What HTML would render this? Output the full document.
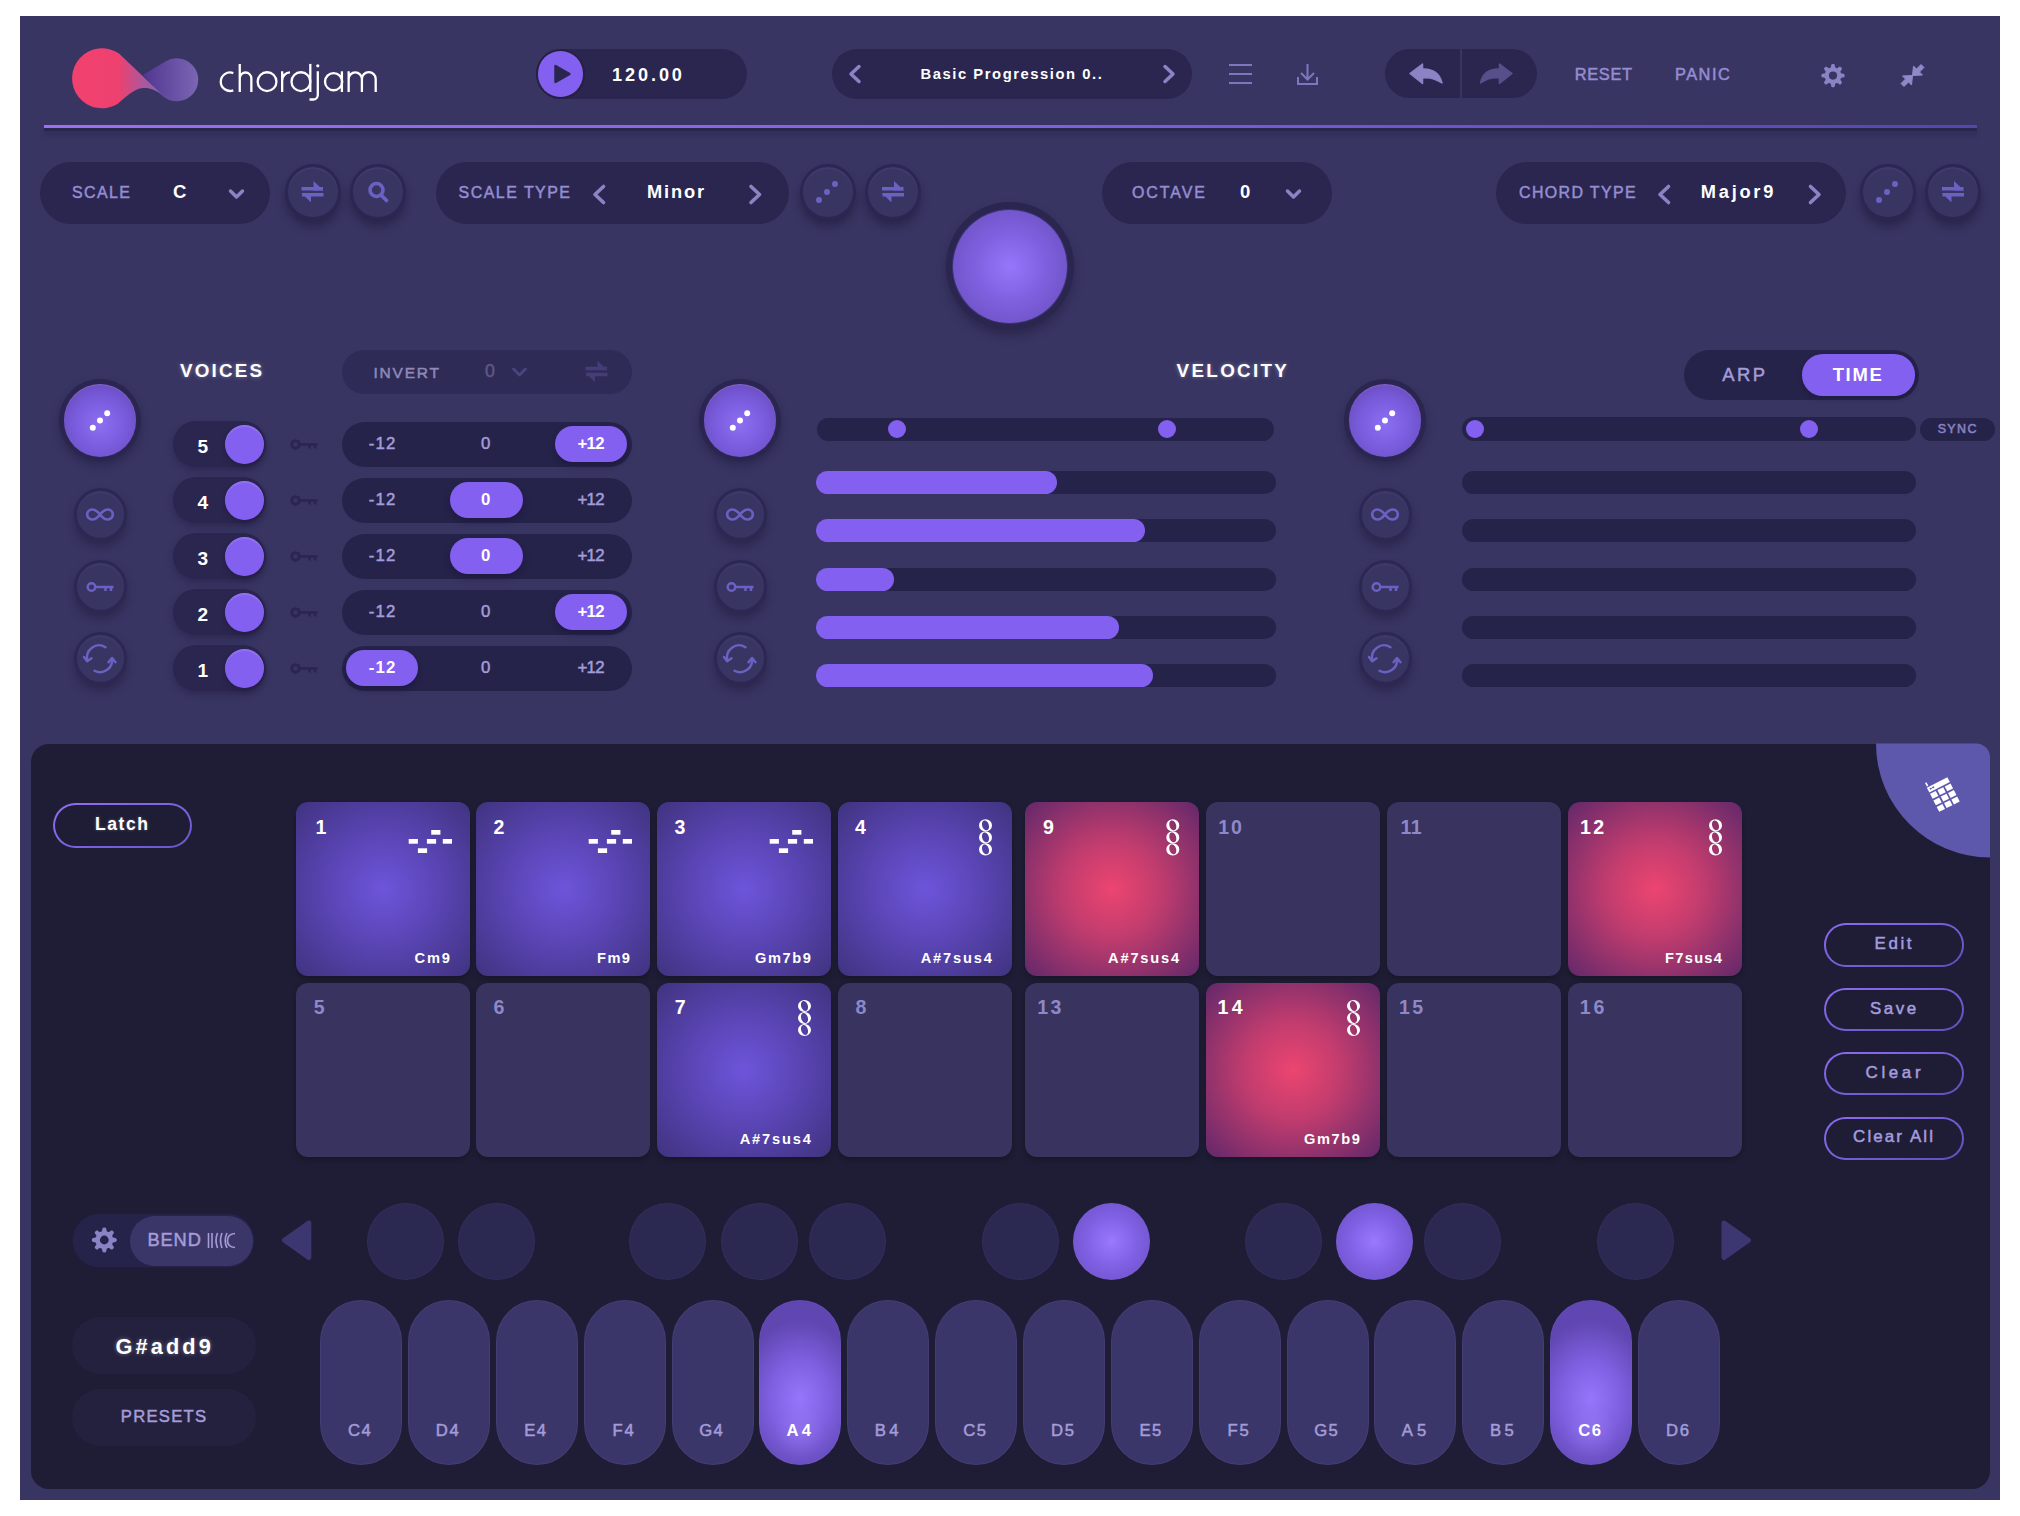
<!DOCTYPE html>
<html><head><meta charset="utf-8"><style>
html,body{margin:0;padding:0;width:2020px;height:1516px;overflow:hidden;background:#fff;}
body{position:relative;font-family:"Liberation Sans",sans-serif;}
.b{position:absolute;}
.t{position:absolute;line-height:1;white-space:nowrap;}
svg.ov{position:absolute;left:0;top:0;}
</style></head><body>
<div class="b" style="left:20.0px;top:16.0px;width:1980.0px;height:1484.0px;border-radius:0.0px;background:#393563;"></div>
<div class="b" style="left:44.0px;top:125.0px;width:1933.0px;height:3.0px;border-radius:0.0px;background:linear-gradient(90deg,#9c70f2 0%,#7f62e0 50%,#5447aa 100%);box-shadow:0 3px 1px rgba(30,27,62,.55), 0 7px 4px rgba(30,27,62,.35)"></div>
<div class="b" style="left:537.0px;top:49.0px;width:210.0px;height:50.0px;border-radius:25.0px;background:#2a2650;"></div>
<div class="b" style="left:537.6px;top:51.2px;width:45.5px;height:45.5px;border-radius:22.8px;background:#8460f0;box-shadow:0 0 0 2px #25213f"></div>
<div class="t" style="left:612.0px;top:65.6px;font-size:18.12px;letter-spacing:2.91px;color:#fff;font-weight:700;">120.00</div>
<div class="b" style="left:832.0px;top:49.0px;width:360.0px;height:50.0px;border-radius:25.0px;background:#2a2650;"></div>
<div class="t" style="left:920.5px;top:66.6px;font-size:14.78px;letter-spacing:1.56px;color:#fff;font-weight:700;">Basic Progression 0..</div>
<div class="b" style="left:1385.0px;top:49.0px;width:152.0px;height:49.0px;border-radius:24.5px;background:#2a2650;"></div>
<div class="b" style="left:1460.0px;top:49.0px;width:2.0px;height:49.0px;border-radius:0.0px;background:#393563;"></div>
<div class="t" style="left:1574.7px;top:66.1px;font-size:16.38px;letter-spacing:0.72px;color:#958dd0;font-weight:400;-webkit-text-stroke:0.5px #958dd0;">RESET</div>
<div class="t" style="left:1675.0px;top:66.1px;font-size:16.38px;letter-spacing:1.50px;color:#958dd0;font-weight:400;-webkit-text-stroke:0.5px #958dd0;">PANIC</div>
<div class="b" style="left:40.0px;top:162.0px;width:230.0px;height:62.0px;border-radius:31.0px;background:#2a2650;"></div>
<div class="t" style="left:72.0px;top:185.1px;font-size:15.94px;letter-spacing:1.43px;color:#958dd0;font-weight:400;-webkit-text-stroke:0.5px #958dd0;">SCALE</div>
<div class="t" style="left:173.0px;top:183.2px;font-size:18.55px;letter-spacing:0.00px;color:#fff;font-weight:700;">C</div>
<div class="b" style="left:284.5px;top:163.5px;width:56.0px;height:56.0px;border-radius:28.0px;background:#393563;border:3px solid #2b2752;box-sizing:border-box;box-shadow:0 7px 9px rgba(22,20,48,.45), inset 0 2px 1px rgba(120,110,200,.12)"></div>
<div class="b" style="left:350.0px;top:163.5px;width:56.0px;height:56.0px;border-radius:28.0px;background:#393563;border:3px solid #2b2752;box-sizing:border-box;box-shadow:0 7px 9px rgba(22,20,48,.45), inset 0 2px 1px rgba(120,110,200,.12)"></div>
<div class="b" style="left:436.0px;top:162.0px;width:352.5px;height:62.0px;border-radius:31.0px;background:#2a2650;"></div>
<div class="t" style="left:458.6px;top:185.1px;font-size:15.94px;letter-spacing:1.48px;color:#958dd0;font-weight:400;-webkit-text-stroke:0.5px #958dd0;">SCALE TYPE</div>
<div class="t" style="left:646.9px;top:183.3px;font-size:18.26px;letter-spacing:1.88px;color:#fff;font-weight:700;">Minor</div>
<div class="b" style="left:799.6px;top:163.5px;width:56.0px;height:56.0px;border-radius:28.0px;background:#393563;border:3px solid #2b2752;box-sizing:border-box;box-shadow:0 7px 9px rgba(22,20,48,.45), inset 0 2px 1px rgba(120,110,200,.12)"></div>
<div class="b" style="left:865.0px;top:163.5px;width:56.0px;height:56.0px;border-radius:28.0px;background:#393563;border:3px solid #2b2752;box-sizing:border-box;box-shadow:0 7px 9px rgba(22,20,48,.45), inset 0 2px 1px rgba(120,110,200,.12)"></div>
<div class="b" style="left:1102.0px;top:162.0px;width:229.5px;height:62.0px;border-radius:31.0px;background:#2a2650;"></div>
<div class="t" style="left:1132.0px;top:185.1px;font-size:15.94px;letter-spacing:1.96px;color:#958dd0;font-weight:400;-webkit-text-stroke:0.5px #958dd0;">OCTAVE</div>
<div class="t" style="left:1240.0px;top:183.2px;font-size:18.55px;letter-spacing:0.00px;color:#fff;font-weight:700;">0</div>
<div class="b" style="left:1496.0px;top:162.0px;width:350.0px;height:62.0px;border-radius:31.0px;background:#2a2650;"></div>
<div class="t" style="left:1519.0px;top:185.1px;font-size:15.94px;letter-spacing:1.38px;color:#958dd0;font-weight:400;-webkit-text-stroke:0.5px #958dd0;">CHORD TYPE</div>
<div class="t" style="left:1700.8px;top:183.3px;font-size:18.26px;letter-spacing:2.74px;color:#fff;font-weight:700;">Major9</div>
<div class="b" style="left:1859.5px;top:163.5px;width:56.0px;height:56.0px;border-radius:28.0px;background:#393563;border:3px solid #2b2752;box-sizing:border-box;box-shadow:0 7px 9px rgba(22,20,48,.45), inset 0 2px 1px rgba(120,110,200,.12)"></div>
<div class="b" style="left:1925.0px;top:163.5px;width:56.0px;height:56.0px;border-radius:28.0px;background:#393563;border:3px solid #2b2752;box-sizing:border-box;box-shadow:0 7px 9px rgba(22,20,48,.45), inset 0 2px 1px rgba(120,110,200,.12)"></div>
<div class="b" style="left:946.0px;top:202.0px;width:128.0px;height:128.0px;border-radius:64.0px;background:#2a2650;box-shadow:0 6px 10px rgba(20,18,45,.35)"></div>
<div class="b" style="left:953.0px;top:209.6px;width:113.5px;height:113.5px;border-radius:56.8px;background:radial-gradient(circle at 50% 50%, #9676fb 0%, #7e60de 45%, #6a4fbf 90%, #7258c8 100%);box-shadow:0 0 0 1px rgba(120,100,220,.25)"></div>
<div class="t" style="left:180.0px;top:362.0px;font-size:18.84px;letter-spacing:2.16px;color:#fff;font-weight:700;text-shadow:0 0 4px rgba(255,255,255,.35)">VOICES</div>
<div class="b" style="left:59.0px;top:379.0px;width:82.0px;height:82.0px;border-radius:41.0px;background:#2a2650;box-shadow:0 5px 8px rgba(20,18,45,.35)"></div>
<div class="b" style="left:63.8px;top:384.2px;width:72.5px;height:72.5px;border-radius:36.2px;background:radial-gradient(circle at 50% 55%, #8c6ef3 0%, #7a5dde 45%, #6447b4 92%, #7058c4 100%);box-shadow:inset 0 1px 1px rgba(255,255,255,.12)"></div>
<div class="b" style="left:73.5px;top:487.5px;width:53.0px;height:53.0px;border-radius:26.5px;background:#393563;border:3px solid #2c2853;box-sizing:border-box;box-shadow:0 6px 8px rgba(22,20,48,.40), inset 0 2px 1px rgba(120,110,200,.10)"></div>
<div class="b" style="left:73.5px;top:559.5px;width:53.0px;height:53.0px;border-radius:26.5px;background:#393563;border:3px solid #2c2853;box-sizing:border-box;box-shadow:0 6px 8px rgba(22,20,48,.40), inset 0 2px 1px rgba(120,110,200,.10)"></div>
<div class="b" style="left:73.5px;top:632.0px;width:53.0px;height:53.0px;border-radius:26.5px;background:#393563;border:3px solid #2c2853;box-sizing:border-box;box-shadow:0 6px 8px rgba(22,20,48,.40), inset 0 2px 1px rgba(120,110,200,.10)"></div>
<div class="b" style="left:173.0px;top:421.0px;width:93.0px;height:46.0px;border-radius:23.0px;background:#2a2650;box-shadow:0 4px 6px rgba(20,18,45,.30)"></div>
<div class="t" style="left:197.5px;top:436.5px;font-size:19.13px;letter-spacing:0.00px;color:#fff;font-weight:700;">5</div>
<div class="b" style="left:224.5px;top:424.5px;width:39.0px;height:39.0px;border-radius:19.5px;background:#8460f0;box-shadow:0 3px 5px rgba(20,18,45,.35), inset 0 2px 1px rgba(255,255,255,.12)"></div>
<div class="b" style="left:341.5px;top:421.5px;width:290.5px;height:45.0px;border-radius:22.5px;background:#26234b;"></div>
<div class="b" style="left:554.8px;top:426.0px;width:72.4px;height:36.0px;border-radius:18.0px;background:#8460f0;box-shadow:0 4px 6px rgba(15,12,40,.35)"></div>
<div class="t" style="left:368.8px;top:435.7px;font-size:16.81px;letter-spacing:1.10px;color:#a49cd8;font-weight:400;-webkit-text-stroke:0.5px #a49cd8;">-12</div>
<div class="t" style="left:481.0px;top:435.7px;font-size:16.81px;letter-spacing:0.00px;color:#a49cd8;font-weight:400;-webkit-text-stroke:0.5px #a49cd8;">0</div>
<div class="t" style="left:577.5px;top:435.7px;font-size:16.81px;letter-spacing:-0.75px;color:#fff;font-weight:700;">+12</div>
<div class="b" style="left:173.0px;top:477.0px;width:93.0px;height:46.0px;border-radius:23.0px;background:#2a2650;box-shadow:0 4px 6px rgba(20,18,45,.30)"></div>
<div class="t" style="left:197.5px;top:492.5px;font-size:19.13px;letter-spacing:0.00px;color:#fff;font-weight:700;">4</div>
<div class="b" style="left:224.5px;top:480.5px;width:39.0px;height:39.0px;border-radius:19.5px;background:#8460f0;box-shadow:0 3px 5px rgba(20,18,45,.35), inset 0 2px 1px rgba(255,255,255,.12)"></div>
<div class="b" style="left:341.5px;top:477.5px;width:290.5px;height:45.0px;border-radius:22.5px;background:#26234b;"></div>
<div class="b" style="left:450.3px;top:482.0px;width:72.4px;height:36.0px;border-radius:18.0px;background:#8460f0;box-shadow:0 4px 6px rgba(15,12,40,.35)"></div>
<div class="t" style="left:368.8px;top:491.7px;font-size:16.81px;letter-spacing:1.10px;color:#a49cd8;font-weight:400;-webkit-text-stroke:0.5px #a49cd8;">-12</div>
<div class="t" style="left:481.0px;top:491.7px;font-size:16.81px;letter-spacing:0.00px;color:#fff;font-weight:700;">0</div>
<div class="t" style="left:577.5px;top:491.7px;font-size:16.81px;letter-spacing:-0.75px;color:#a49cd8;font-weight:400;-webkit-text-stroke:0.5px #a49cd8;">+12</div>
<div class="b" style="left:173.0px;top:533.0px;width:93.0px;height:46.0px;border-radius:23.0px;background:#2a2650;box-shadow:0 4px 6px rgba(20,18,45,.30)"></div>
<div class="t" style="left:197.5px;top:548.5px;font-size:19.13px;letter-spacing:0.00px;color:#fff;font-weight:700;">3</div>
<div class="b" style="left:224.5px;top:536.5px;width:39.0px;height:39.0px;border-radius:19.5px;background:#8460f0;box-shadow:0 3px 5px rgba(20,18,45,.35), inset 0 2px 1px rgba(255,255,255,.12)"></div>
<div class="b" style="left:341.5px;top:533.5px;width:290.5px;height:45.0px;border-radius:22.5px;background:#26234b;"></div>
<div class="b" style="left:450.3px;top:538.0px;width:72.4px;height:36.0px;border-radius:18.0px;background:#8460f0;box-shadow:0 4px 6px rgba(15,12,40,.35)"></div>
<div class="t" style="left:368.8px;top:547.7px;font-size:16.81px;letter-spacing:1.10px;color:#a49cd8;font-weight:400;-webkit-text-stroke:0.5px #a49cd8;">-12</div>
<div class="t" style="left:481.0px;top:547.7px;font-size:16.81px;letter-spacing:0.00px;color:#fff;font-weight:700;">0</div>
<div class="t" style="left:577.5px;top:547.7px;font-size:16.81px;letter-spacing:-0.75px;color:#a49cd8;font-weight:400;-webkit-text-stroke:0.5px #a49cd8;">+12</div>
<div class="b" style="left:173.0px;top:589.0px;width:93.0px;height:46.0px;border-radius:23.0px;background:#2a2650;box-shadow:0 4px 6px rgba(20,18,45,.30)"></div>
<div class="t" style="left:197.5px;top:604.5px;font-size:19.13px;letter-spacing:0.00px;color:#fff;font-weight:700;">2</div>
<div class="b" style="left:224.5px;top:592.5px;width:39.0px;height:39.0px;border-radius:19.5px;background:#8460f0;box-shadow:0 3px 5px rgba(20,18,45,.35), inset 0 2px 1px rgba(255,255,255,.12)"></div>
<div class="b" style="left:341.5px;top:589.5px;width:290.5px;height:45.0px;border-radius:22.5px;background:#26234b;"></div>
<div class="b" style="left:554.8px;top:594.0px;width:72.4px;height:36.0px;border-radius:18.0px;background:#8460f0;box-shadow:0 4px 6px rgba(15,12,40,.35)"></div>
<div class="t" style="left:368.8px;top:603.7px;font-size:16.81px;letter-spacing:1.10px;color:#a49cd8;font-weight:400;-webkit-text-stroke:0.5px #a49cd8;">-12</div>
<div class="t" style="left:481.0px;top:603.7px;font-size:16.81px;letter-spacing:0.00px;color:#a49cd8;font-weight:400;-webkit-text-stroke:0.5px #a49cd8;">0</div>
<div class="t" style="left:577.5px;top:603.7px;font-size:16.81px;letter-spacing:-0.75px;color:#fff;font-weight:700;">+12</div>
<div class="b" style="left:173.0px;top:645.0px;width:93.0px;height:46.0px;border-radius:23.0px;background:#2a2650;box-shadow:0 4px 6px rgba(20,18,45,.30)"></div>
<div class="t" style="left:197.5px;top:660.5px;font-size:19.13px;letter-spacing:0.00px;color:#fff;font-weight:700;">1</div>
<div class="b" style="left:224.5px;top:648.5px;width:39.0px;height:39.0px;border-radius:19.5px;background:#8460f0;box-shadow:0 3px 5px rgba(20,18,45,.35), inset 0 2px 1px rgba(255,255,255,.12)"></div>
<div class="b" style="left:341.5px;top:645.5px;width:290.5px;height:45.0px;border-radius:22.5px;background:#26234b;"></div>
<div class="b" style="left:345.8px;top:650.0px;width:72.4px;height:36.0px;border-radius:18.0px;background:#8460f0;box-shadow:0 4px 6px rgba(15,12,40,.35)"></div>
<div class="t" style="left:368.8px;top:659.7px;font-size:16.81px;letter-spacing:1.10px;color:#fff;font-weight:700;">-12</div>
<div class="t" style="left:481.0px;top:659.7px;font-size:16.81px;letter-spacing:0.00px;color:#a49cd8;font-weight:400;-webkit-text-stroke:0.5px #a49cd8;">0</div>
<div class="t" style="left:577.5px;top:659.7px;font-size:16.81px;letter-spacing:-0.75px;color:#a49cd8;font-weight:400;-webkit-text-stroke:0.5px #a49cd8;">+12</div>
<div class="b" style="left:341.5px;top:349.5px;width:290.5px;height:44.5px;border-radius:22.2px;background:#2f2b57;"></div>
<div class="t" style="left:373.5px;top:364.5px;font-size:15.51px;letter-spacing:1.78px;color:#8e89b8;font-weight:400;-webkit-text-stroke:0.5px #8e89b8;">INVERT</div>
<div class="t" style="left:485.0px;top:362.6px;font-size:17.68px;letter-spacing:0.00px;color:#5e5888;font-weight:400;-webkit-text-stroke:0.5px #5e5888;">0</div>
<div class="t" style="left:1176.6px;top:362.0px;font-size:18.84px;letter-spacing:2.31px;color:#fff;font-weight:700;text-shadow:0 0 4px rgba(255,255,255,.35)">VELOCITY</div>
<div class="b" style="left:699.0px;top:379.0px;width:82.0px;height:82.0px;border-radius:41.0px;background:#2a2650;box-shadow:0 5px 8px rgba(20,18,45,.35)"></div>
<div class="b" style="left:703.8px;top:384.2px;width:72.5px;height:72.5px;border-radius:36.2px;background:radial-gradient(circle at 50% 55%, #8c6ef3 0%, #7a5dde 45%, #6447b4 92%, #7058c4 100%);box-shadow:inset 0 1px 1px rgba(255,255,255,.12)"></div>
<div class="b" style="left:713.5px;top:487.5px;width:53.0px;height:53.0px;border-radius:26.5px;background:#393563;border:3px solid #2c2853;box-sizing:border-box;box-shadow:0 6px 8px rgba(22,20,48,.40), inset 0 2px 1px rgba(120,110,200,.10)"></div>
<div class="b" style="left:713.5px;top:559.5px;width:53.0px;height:53.0px;border-radius:26.5px;background:#393563;border:3px solid #2c2853;box-sizing:border-box;box-shadow:0 6px 8px rgba(22,20,48,.40), inset 0 2px 1px rgba(120,110,200,.10)"></div>
<div class="b" style="left:713.5px;top:632.0px;width:53.0px;height:53.0px;border-radius:26.5px;background:#393563;border:3px solid #2c2853;box-sizing:border-box;box-shadow:0 6px 8px rgba(22,20,48,.40), inset 0 2px 1px rgba(120,110,200,.10)"></div>
<div class="b" style="left:816.5px;top:417.5px;width:457.5px;height:23.5px;border-radius:11.8px;background:#26234b;"></div>
<div class="b" style="left:887.7px;top:420.0px;width:18.0px;height:18.0px;border-radius:9.0px;background:#8460f0;"></div>
<div class="b" style="left:1157.5px;top:420.0px;width:18.0px;height:18.0px;border-radius:9.0px;background:#8460f0;"></div>
<div class="b" style="left:816.0px;top:470.5px;width:459.5px;height:23.0px;border-radius:11.5px;background:#26234b;"></div>
<div class="b" style="left:816.0px;top:470.5px;width:240.6px;height:23.0px;border-radius:11.5px;background:#8460f0;"></div>
<div class="b" style="left:816.0px;top:519.0px;width:459.5px;height:23.0px;border-radius:11.5px;background:#26234b;"></div>
<div class="b" style="left:816.0px;top:519.0px;width:329.0px;height:23.0px;border-radius:11.5px;background:#8460f0;"></div>
<div class="b" style="left:816.0px;top:567.5px;width:459.5px;height:23.0px;border-radius:11.5px;background:#26234b;"></div>
<div class="b" style="left:816.0px;top:567.5px;width:78.0px;height:23.0px;border-radius:11.5px;background:#8460f0;"></div>
<div class="b" style="left:816.0px;top:615.5px;width:459.5px;height:23.0px;border-radius:11.5px;background:#26234b;"></div>
<div class="b" style="left:816.0px;top:615.5px;width:303.0px;height:23.0px;border-radius:11.5px;background:#8460f0;"></div>
<div class="b" style="left:816.0px;top:663.5px;width:459.5px;height:23.0px;border-radius:11.5px;background:#26234b;"></div>
<div class="b" style="left:816.0px;top:663.5px;width:336.7px;height:23.0px;border-radius:11.5px;background:#8460f0;"></div>
<div class="b" style="left:1684.0px;top:349.5px;width:234.5px;height:50.5px;border-radius:25.2px;background:#26234b;"></div>
<div class="b" style="left:1802.0px;top:354.0px;width:113.0px;height:41.5px;border-radius:20.8px;background:#8460f0;box-shadow:0 3px 5px rgba(15,12,40,.3)"></div>
<div class="t" style="left:1722.3px;top:366.0px;font-size:18.41px;letter-spacing:2.39px;color:#a49cd8;font-weight:400;-webkit-text-stroke:0.5px #a49cd8;">ARP</div>
<div class="t" style="left:1832.7px;top:366.0px;font-size:18.41px;letter-spacing:1.67px;color:#fff;font-weight:700;">TIME</div>
<div class="b" style="left:1344.0px;top:379.0px;width:82.0px;height:82.0px;border-radius:41.0px;background:#2a2650;box-shadow:0 5px 8px rgba(20,18,45,.35)"></div>
<div class="b" style="left:1348.8px;top:384.2px;width:72.5px;height:72.5px;border-radius:36.2px;background:radial-gradient(circle at 50% 55%, #8c6ef3 0%, #7a5dde 45%, #6447b4 92%, #7058c4 100%);box-shadow:inset 0 1px 1px rgba(255,255,255,.12)"></div>
<div class="b" style="left:1358.5px;top:487.5px;width:53.0px;height:53.0px;border-radius:26.5px;background:#393563;border:3px solid #2c2853;box-sizing:border-box;box-shadow:0 6px 8px rgba(22,20,48,.40), inset 0 2px 1px rgba(120,110,200,.10)"></div>
<div class="b" style="left:1358.5px;top:559.5px;width:53.0px;height:53.0px;border-radius:26.5px;background:#393563;border:3px solid #2c2853;box-sizing:border-box;box-shadow:0 6px 8px rgba(22,20,48,.40), inset 0 2px 1px rgba(120,110,200,.10)"></div>
<div class="b" style="left:1358.5px;top:632.0px;width:53.0px;height:53.0px;border-radius:26.5px;background:#393563;border:3px solid #2c2853;box-sizing:border-box;box-shadow:0 6px 8px rgba(22,20,48,.40), inset 0 2px 1px rgba(120,110,200,.10)"></div>
<div class="b" style="left:1462.0px;top:417.0px;width:454.0px;height:24.0px;border-radius:12.0px;background:#26234b;"></div>
<div class="b" style="left:1465.8px;top:420.0px;width:18.0px;height:18.0px;border-radius:9.0px;background:#8460f0;"></div>
<div class="b" style="left:1800.0px;top:420.0px;width:18.0px;height:18.0px;border-radius:9.0px;background:#8460f0;"></div>
<div class="b" style="left:1920.0px;top:418.0px;width:75.0px;height:23.0px;border-radius:11.5px;background:#26234b;"></div>
<div class="t" style="left:1937.7px;top:423.0px;font-size:12.46px;letter-spacing:1.38px;color:#8a83c4;font-weight:400;-webkit-text-stroke:0.5px #8a83c4;">SYNC</div>
<div class="b" style="left:1462.0px;top:470.5px;width:454.0px;height:23.0px;border-radius:11.5px;background:#26234b;"></div>
<div class="b" style="left:1462.0px;top:519.0px;width:454.0px;height:23.0px;border-radius:11.5px;background:#26234b;"></div>
<div class="b" style="left:1462.0px;top:567.5px;width:454.0px;height:23.0px;border-radius:11.5px;background:#26234b;"></div>
<div class="b" style="left:1462.0px;top:615.5px;width:454.0px;height:23.0px;border-radius:11.5px;background:#26234b;"></div>
<div class="b" style="left:1462.0px;top:663.5px;width:454.0px;height:23.0px;border-radius:11.5px;background:#26234b;"></div>
<div class="b" style="left:31.0px;top:743.5px;width:1959.0px;height:745.5px;border-radius:18.0px;background:#1e1d35;"></div>
<div class="b" style="left:53.0px;top:803.0px;width:139.0px;height:45.0px;border-radius:22.5px;background:linear-gradient(#1e1d35,#1e1d35) padding-box, linear-gradient(160deg,#916ff2,#6a56cc) border-box;border:2.5px solid transparent;box-sizing:border-box"></div>
<div class="t" style="left:94.9px;top:816.1px;font-size:17.54px;letter-spacing:1.59px;color:#fff;font-weight:700;text-shadow:0 0 3px rgba(255,255,255,.3)">Latch</div>
<div class="b" style="left:296.0px;top:802.4px;width:173.5px;height:173.5px;border-radius:12.0px;background:radial-gradient(circle at 50% 50%, #6d55da 0%, #5a45b5 45%, #40337f 100%);box-shadow:0 3px 5px rgba(0,0,0,.25)"></div>
<div class="t" style="left:315.6px;top:817.6px;font-size:19.57px;letter-spacing:0.00px;color:#fff;font-weight:700;">1</div>
<div class="t" style="left:414.5px;top:951.1px;font-size:14.64px;letter-spacing:1.87px;color:#fff;font-weight:700;">Cm9</div>
<div class="b" style="left:476.0px;top:802.4px;width:173.5px;height:173.5px;border-radius:12.0px;background:radial-gradient(circle at 50% 50%, #6d55da 0%, #5a45b5 45%, #40337f 100%);box-shadow:0 3px 5px rgba(0,0,0,.25)"></div>
<div class="t" style="left:493.5px;top:817.6px;font-size:19.57px;letter-spacing:0.00px;color:#fff;font-weight:700;">2</div>
<div class="t" style="left:597.0px;top:951.1px;font-size:14.64px;letter-spacing:1.46px;color:#fff;font-weight:700;">Fm9</div>
<div class="b" style="left:657.0px;top:802.4px;width:173.5px;height:173.5px;border-radius:12.0px;background:radial-gradient(circle at 50% 50%, #6d55da 0%, #5a45b5 45%, #40337f 100%);box-shadow:0 3px 5px rgba(0,0,0,.25)"></div>
<div class="t" style="left:674.5px;top:817.6px;font-size:19.57px;letter-spacing:0.00px;color:#fff;font-weight:700;">3</div>
<div class="t" style="left:755.0px;top:951.1px;font-size:14.64px;letter-spacing:1.59px;color:#fff;font-weight:700;">Gm7b9</div>
<div class="b" style="left:838.0px;top:802.4px;width:173.5px;height:173.5px;border-radius:12.0px;background:radial-gradient(circle at 50% 50%, #6d55da 0%, #5a45b5 45%, #40337f 100%);box-shadow:0 3px 5px rgba(0,0,0,.25)"></div>
<div class="t" style="left:855.0px;top:817.6px;font-size:19.57px;letter-spacing:0.00px;color:#fff;font-weight:700;">4</div>
<div class="t" style="left:920.7px;top:951.1px;font-size:14.64px;letter-spacing:1.84px;color:#fff;font-weight:700;">A#7sus4</div>
<div class="b" style="left:1025.3px;top:802.4px;width:173.5px;height:173.5px;border-radius:12.0px;background:radial-gradient(circle at 50% 50%, #ec4570 0%, #c03c6e 40%, #62286a 100%);box-shadow:0 3px 5px rgba(0,0,0,.25)"></div>
<div class="t" style="left:1042.9px;top:817.6px;font-size:19.57px;letter-spacing:0.00px;color:#fff;font-weight:700;">9</div>
<div class="t" style="left:1108.0px;top:951.1px;font-size:14.64px;letter-spacing:1.84px;color:#fff;font-weight:700;">A#7sus4</div>
<div class="b" style="left:1206.0px;top:802.4px;width:173.5px;height:173.5px;border-radius:12.0px;background:#38335f;box-shadow:0 3px 5px rgba(0,0,0,.25)"></div>
<div class="t" style="left:1218.2px;top:817.6px;font-size:19.57px;letter-spacing:1.88px;color:#8f88c8;font-weight:700;">10</div>
<div class="b" style="left:1387.0px;top:802.4px;width:173.5px;height:173.5px;border-radius:12.0px;background:#38335f;box-shadow:0 3px 5px rgba(0,0,0,.25)"></div>
<div class="t" style="left:1400.5px;top:817.6px;font-size:19.57px;letter-spacing:0.36px;color:#8f88c8;font-weight:700;">11</div>
<div class="b" style="left:1568.0px;top:802.4px;width:173.5px;height:173.5px;border-radius:12.0px;background:radial-gradient(circle at 50% 50%, #ec4570 0%, #c03c6e 40%, #62286a 100%);box-shadow:0 3px 5px rgba(0,0,0,.25)"></div>
<div class="t" style="left:1580.0px;top:817.6px;font-size:19.57px;letter-spacing:2.28px;color:#fff;font-weight:700;">12</div>
<div class="t" style="left:1665.0px;top:951.1px;font-size:14.64px;letter-spacing:1.31px;color:#fff;font-weight:700;">F7sus4</div>
<div class="b" style="left:296.0px;top:983.0px;width:173.5px;height:173.5px;border-radius:12.0px;background:#38335f;box-shadow:0 3px 5px rgba(0,0,0,.25)"></div>
<div class="t" style="left:313.8px;top:998.2px;font-size:19.57px;letter-spacing:0.00px;color:#8f88c8;font-weight:700;">5</div>
<div class="b" style="left:476.0px;top:983.0px;width:173.5px;height:173.5px;border-radius:12.0px;background:#38335f;box-shadow:0 3px 5px rgba(0,0,0,.25)"></div>
<div class="t" style="left:493.5px;top:998.2px;font-size:19.57px;letter-spacing:0.00px;color:#8f88c8;font-weight:700;">6</div>
<div class="b" style="left:657.0px;top:983.0px;width:173.5px;height:173.5px;border-radius:12.0px;background:radial-gradient(circle at 50% 50%, #6d55da 0%, #5a45b5 45%, #40337f 100%);box-shadow:0 3px 5px rgba(0,0,0,.25)"></div>
<div class="t" style="left:674.8px;top:998.2px;font-size:19.57px;letter-spacing:0.00px;color:#fff;font-weight:700;">7</div>
<div class="t" style="left:739.7px;top:1131.7px;font-size:14.64px;letter-spacing:1.84px;color:#fff;font-weight:700;">A#7sus4</div>
<div class="b" style="left:838.0px;top:983.0px;width:173.5px;height:173.5px;border-radius:12.0px;background:#38335f;box-shadow:0 3px 5px rgba(0,0,0,.25)"></div>
<div class="t" style="left:855.5px;top:998.2px;font-size:19.57px;letter-spacing:0.00px;color:#8f88c8;font-weight:700;">8</div>
<div class="b" style="left:1025.3px;top:983.0px;width:173.5px;height:173.5px;border-radius:12.0px;background:#38335f;box-shadow:0 3px 5px rgba(0,0,0,.25)"></div>
<div class="t" style="left:1037.3px;top:998.2px;font-size:19.57px;letter-spacing:2.28px;color:#8f88c8;font-weight:700;">13</div>
<div class="b" style="left:1206.0px;top:983.0px;width:173.5px;height:173.5px;border-radius:12.0px;background:radial-gradient(circle at 50% 50%, #ec4570 0%, #c03c6e 40%, #62286a 100%);box-shadow:0 3px 5px rgba(0,0,0,.25)"></div>
<div class="t" style="left:1217.5px;top:998.2px;font-size:19.57px;letter-spacing:3.28px;color:#fff;font-weight:700;">14</div>
<div class="t" style="left:1304.0px;top:1131.7px;font-size:14.64px;letter-spacing:1.59px;color:#fff;font-weight:700;">Gm7b9</div>
<div class="b" style="left:1387.0px;top:983.0px;width:173.5px;height:173.5px;border-radius:12.0px;background:#38335f;box-shadow:0 3px 5px rgba(0,0,0,.25)"></div>
<div class="t" style="left:1399.0px;top:998.2px;font-size:19.57px;letter-spacing:2.28px;color:#8f88c8;font-weight:700;">15</div>
<div class="b" style="left:1568.0px;top:983.0px;width:173.5px;height:173.5px;border-radius:12.0px;background:#38335f;box-shadow:0 3px 5px rgba(0,0,0,.25)"></div>
<div class="t" style="left:1579.8px;top:998.2px;font-size:19.57px;letter-spacing:2.78px;color:#8f88c8;font-weight:700;">16</div>
<div class="b" style="left:1824.0px;top:923.0px;width:140.0px;height:43.6px;border-radius:21.8px;background:linear-gradient(#1e1d35,#1e1d35) padding-box, linear-gradient(160deg,#8d6cf0,#5f4fbf) border-box;border:2.5px solid transparent;box-sizing:border-box"></div>
<div class="t" style="left:1874.6px;top:936.1px;font-size:16.96px;letter-spacing:2.58px;color:#a59cdf;font-weight:400;-webkit-text-stroke:0.5px #a59cdf;">Edit</div>
<div class="b" style="left:1824.0px;top:987.6px;width:140.0px;height:43.7px;border-radius:21.8px;background:linear-gradient(#1e1d35,#1e1d35) padding-box, linear-gradient(160deg,#8d6cf0,#5f4fbf) border-box;border:2.5px solid transparent;box-sizing:border-box"></div>
<div class="t" style="left:1870.1px;top:1000.7px;font-size:16.96px;letter-spacing:2.45px;color:#a59cdf;font-weight:400;-webkit-text-stroke:0.5px #a59cdf;">Save</div>
<div class="b" style="left:1824.0px;top:1051.5px;width:140.0px;height:43.5px;border-radius:21.8px;background:linear-gradient(#1e1d35,#1e1d35) padding-box, linear-gradient(160deg,#8d6cf0,#5f4fbf) border-box;border:2.5px solid transparent;box-sizing:border-box"></div>
<div class="t" style="left:1865.6px;top:1064.5px;font-size:16.96px;letter-spacing:3.62px;color:#a59cdf;font-weight:400;-webkit-text-stroke:0.5px #a59cdf;">Clear</div>
<div class="b" style="left:1824.0px;top:1116.5px;width:140.0px;height:43.3px;border-radius:21.6px;background:linear-gradient(#1e1d35,#1e1d35) padding-box, linear-gradient(160deg,#8d6cf0,#5f4fbf) border-box;border:2.5px solid transparent;box-sizing:border-box"></div>
<div class="t" style="left:1853.1px;top:1129.4px;font-size:16.96px;letter-spacing:2.10px;color:#a59cdf;font-weight:400;-webkit-text-stroke:0.5px #a59cdf;">Clear All</div>
<div class="b" style="left:72.0px;top:1213.0px;width:183.0px;height:55.0px;border-radius:27.5px;background:#26234a;box-shadow:inset 0 0 0 1px rgba(0,0,0,.15)"></div>
<div class="b" style="left:130.0px;top:1216.0px;width:123.0px;height:49.5px;border-radius:24.8px;background:#3b3668;"></div>
<div class="t" style="left:147.6px;top:1231.4px;font-size:18.26px;letter-spacing:0.84px;color:#a49cd8;font-weight:400;-webkit-text-stroke:0.5px #a49cd8;">BEND</div>
<div class="b" style="left:366.5px;top:1203.0px;width:77.0px;height:77.0px;border-radius:38.5px;background:#2b2851;box-shadow:inset 0 0 0 1px rgba(120,110,200,.10)"></div>
<div class="b" style="left:458.0px;top:1203.0px;width:77.0px;height:77.0px;border-radius:38.5px;background:#2b2851;box-shadow:inset 0 0 0 1px rgba(120,110,200,.10)"></div>
<div class="b" style="left:629.2px;top:1203.0px;width:77.0px;height:77.0px;border-radius:38.5px;background:#2b2851;box-shadow:inset 0 0 0 1px rgba(120,110,200,.10)"></div>
<div class="b" style="left:720.5px;top:1203.0px;width:77.0px;height:77.0px;border-radius:38.5px;background:#2b2851;box-shadow:inset 0 0 0 1px rgba(120,110,200,.10)"></div>
<div class="b" style="left:808.5px;top:1203.0px;width:77.0px;height:77.0px;border-radius:38.5px;background:#2b2851;box-shadow:inset 0 0 0 1px rgba(120,110,200,.10)"></div>
<div class="b" style="left:981.5px;top:1203.0px;width:77.0px;height:77.0px;border-radius:38.5px;background:#2b2851;box-shadow:inset 0 0 0 1px rgba(120,110,200,.10)"></div>
<div class="b" style="left:1073.0px;top:1203.0px;width:77.0px;height:77.0px;border-radius:38.5px;background:radial-gradient(circle at 50% 50%, #9a78ff 0%, #7e5fe2 50%, #6a4fc0 100%);"></div>
<div class="b" style="left:1244.5px;top:1203.0px;width:77.0px;height:77.0px;border-radius:38.5px;background:#2b2851;box-shadow:inset 0 0 0 1px rgba(120,110,200,.10)"></div>
<div class="b" style="left:1335.5px;top:1203.0px;width:77.0px;height:77.0px;border-radius:38.5px;background:radial-gradient(circle at 50% 50%, #9a78ff 0%, #7e5fe2 50%, #6a4fc0 100%);"></div>
<div class="b" style="left:1423.5px;top:1203.0px;width:77.0px;height:77.0px;border-radius:38.5px;background:#2b2851;box-shadow:inset 0 0 0 1px rgba(120,110,200,.10)"></div>
<div class="b" style="left:1596.9px;top:1203.0px;width:77.0px;height:77.0px;border-radius:38.5px;background:#2b2851;box-shadow:inset 0 0 0 1px rgba(120,110,200,.10)"></div>
<div class="b" style="left:72.0px;top:1317.0px;width:184.0px;height:56.6px;border-radius:28.3px;background:#24213f;"></div>
<div class="t" style="left:115.5px;top:1335.5px;font-size:21.74px;letter-spacing:3.10px;color:#fff;font-weight:700;text-shadow:0 0 4px rgba(255,255,255,.35)">G#add9</div>
<div class="b" style="left:72.0px;top:1389.0px;width:184.0px;height:56.6px;border-radius:28.3px;background:#24213f;"></div>
<div class="t" style="left:120.8px;top:1408.8px;font-size:16.67px;letter-spacing:1.26px;color:#a49cd8;font-weight:400;-webkit-text-stroke:0.5px #a49cd8;">PRESETS</div>
<div class="b" style="left:320.0px;top:1300.0px;width:82.0px;height:165.0px;border-radius:41.0px;background:#3b3669;box-shadow:inset 0 0 0 1px rgba(140,130,220,.10)"></div>
<div class="t" style="left:348.1px;top:1422.6px;font-size:16.67px;letter-spacing:1.47px;color:#a49cd8;font-weight:400;-webkit-text-stroke:0.5px #a49cd8;">C4</div>
<div class="b" style="left:407.9px;top:1300.0px;width:82.0px;height:165.0px;border-radius:41.0px;background:#3b3669;box-shadow:inset 0 0 0 1px rgba(140,130,220,.10)"></div>
<div class="t" style="left:435.8px;top:1422.6px;font-size:16.67px;letter-spacing:1.77px;color:#a49cd8;font-weight:400;-webkit-text-stroke:0.5px #a49cd8;">D4</div>
<div class="b" style="left:495.7px;top:1300.0px;width:82.0px;height:165.0px;border-radius:41.0px;background:#3b3669;box-shadow:inset 0 0 0 1px rgba(140,130,220,.10)"></div>
<div class="t" style="left:524.3px;top:1422.6px;font-size:16.67px;letter-spacing:1.38px;color:#a49cd8;font-weight:400;-webkit-text-stroke:0.5px #a49cd8;">E4</div>
<div class="b" style="left:583.6px;top:1300.0px;width:82.0px;height:165.0px;border-radius:41.0px;background:#3b3669;box-shadow:inset 0 0 0 1px rgba(140,130,220,.10)"></div>
<div class="t" style="left:612.5px;top:1422.6px;font-size:16.67px;letter-spacing:1.78px;color:#a49cd8;font-weight:400;-webkit-text-stroke:0.5px #a49cd8;">F4</div>
<div class="b" style="left:671.5px;top:1300.0px;width:82.0px;height:165.0px;border-radius:41.0px;background:#3b3669;box-shadow:inset 0 0 0 1px rgba(140,130,220,.10)"></div>
<div class="t" style="left:699.2px;top:1422.6px;font-size:16.67px;letter-spacing:1.25px;color:#a49cd8;font-weight:400;-webkit-text-stroke:0.5px #a49cd8;">G4</div>
<div class="b" style="left:759.4px;top:1300.0px;width:82.0px;height:165.0px;border-radius:41.0px;background:radial-gradient(circle 26px at 50% 80%, rgba(200,180,255,.16), rgba(200,180,255,0) 100%), radial-gradient(ellipse 75% 48% at 50% 60%, #9676fb 0%, #7e5fe0 50%, #5f46b0 100%);box-shadow:inset 0 0 0 1px rgba(140,130,220,.10)"></div>
<div class="t" style="left:786.6px;top:1422.6px;font-size:16.67px;letter-spacing:3.17px;color:#fff;font-weight:700;">A4</div>
<div class="b" style="left:847.2px;top:1300.0px;width:82.0px;height:165.0px;border-radius:41.0px;background:#3b3669;box-shadow:inset 0 0 0 1px rgba(140,130,220,.10)"></div>
<div class="t" style="left:874.8px;top:1422.6px;font-size:16.67px;letter-spacing:3.38px;color:#a49cd8;font-weight:400;-webkit-text-stroke:0.5px #a49cd8;">B4</div>
<div class="b" style="left:935.1px;top:1300.0px;width:82.0px;height:165.0px;border-radius:41.0px;background:#3b3669;box-shadow:inset 0 0 0 1px rgba(140,130,220,.10)"></div>
<div class="t" style="left:963.2px;top:1422.6px;font-size:16.67px;letter-spacing:1.47px;color:#a49cd8;font-weight:400;-webkit-text-stroke:0.5px #a49cd8;">C5</div>
<div class="b" style="left:1023.0px;top:1300.0px;width:82.0px;height:165.0px;border-radius:41.0px;background:#3b3669;box-shadow:inset 0 0 0 1px rgba(140,130,220,.10)"></div>
<div class="t" style="left:1050.9px;top:1422.6px;font-size:16.67px;letter-spacing:1.77px;color:#a49cd8;font-weight:400;-webkit-text-stroke:0.5px #a49cd8;">D5</div>
<div class="b" style="left:1110.8px;top:1300.0px;width:82.0px;height:165.0px;border-radius:41.0px;background:#3b3669;box-shadow:inset 0 0 0 1px rgba(140,130,220,.10)"></div>
<div class="t" style="left:1139.4px;top:1422.6px;font-size:16.67px;letter-spacing:1.38px;color:#a49cd8;font-weight:400;-webkit-text-stroke:0.5px #a49cd8;">E5</div>
<div class="b" style="left:1198.7px;top:1300.0px;width:82.0px;height:165.0px;border-radius:41.0px;background:#3b3669;box-shadow:inset 0 0 0 1px rgba(140,130,220,.10)"></div>
<div class="t" style="left:1227.6px;top:1422.6px;font-size:16.67px;letter-spacing:1.78px;color:#a49cd8;font-weight:400;-webkit-text-stroke:0.5px #a49cd8;">F5</div>
<div class="b" style="left:1286.6px;top:1300.0px;width:82.0px;height:165.0px;border-radius:41.0px;background:#3b3669;box-shadow:inset 0 0 0 1px rgba(140,130,220,.10)"></div>
<div class="t" style="left:1314.3px;top:1422.6px;font-size:16.67px;letter-spacing:1.25px;color:#a49cd8;font-weight:400;-webkit-text-stroke:0.5px #a49cd8;">G5</div>
<div class="b" style="left:1374.4px;top:1300.0px;width:82.0px;height:165.0px;border-radius:41.0px;background:#3b3669;box-shadow:inset 0 0 0 1px rgba(140,130,220,.10)"></div>
<div class="t" style="left:1401.7px;top:1422.6px;font-size:16.67px;letter-spacing:4.08px;color:#a49cd8;font-weight:400;-webkit-text-stroke:0.5px #a49cd8;">A5</div>
<div class="b" style="left:1462.3px;top:1300.0px;width:82.0px;height:165.0px;border-radius:41.0px;background:#3b3669;box-shadow:inset 0 0 0 1px rgba(140,130,220,.10)"></div>
<div class="t" style="left:1489.9px;top:1422.6px;font-size:16.67px;letter-spacing:3.38px;color:#a49cd8;font-weight:400;-webkit-text-stroke:0.5px #a49cd8;">B5</div>
<div class="b" style="left:1550.2px;top:1300.0px;width:82.0px;height:165.0px;border-radius:41.0px;background:radial-gradient(circle 26px at 50% 80%, rgba(200,180,255,.16), rgba(200,180,255,0) 100%), radial-gradient(ellipse 75% 48% at 50% 60%, #9676fb 0%, #7e5fe0 50%, #5f46b0 100%);box-shadow:inset 0 0 0 1px rgba(140,130,220,.10)"></div>
<div class="t" style="left:1578.3px;top:1422.6px;font-size:16.67px;letter-spacing:1.47px;color:#fff;font-weight:700;">C6</div>
<div class="b" style="left:1638.1px;top:1300.0px;width:82.0px;height:165.0px;border-radius:41.0px;background:#3b3669;box-shadow:inset 0 0 0 1px rgba(140,130,220,.10)"></div>
<div class="t" style="left:1666.0px;top:1422.6px;font-size:16.67px;letter-spacing:1.77px;color:#a49cd8;font-weight:400;-webkit-text-stroke:0.5px #a49cd8;">D6</div>
<svg class="ov" width="2020" height="1516" viewBox="0 0 2020 1516">
<defs>
<linearGradient id="lg" x1="70" y1="0" x2="200" y2="0" gradientUnits="userSpaceOnUse">
<stop offset="0" stop-color="#f2416e"/><stop offset="0.38" stop-color="#ef4170"/>
<stop offset="0.6" stop-color="#8a5aa8"/><stop offset="0.62" stop-color="#5b3d95"/><stop offset="1" stop-color="#7862b0"/></linearGradient>
<radialGradient id="knob" cx="50%" cy="50%" r="50%"><stop offset="0" stop-color="#9676fb"/><stop offset="1" stop-color="#6a4fbe"/></radialGradient>
</defs>
<linearGradient id="lgp" x1="143" y1="0" x2="198" y2="0" gradientUnits="userSpaceOnUse"><stop offset="0" stop-color="#523690"/><stop offset="1" stop-color="#7a66b4"/></linearGradient>
<linearGradient id="lgr" x1="72" y1="0" x2="165" y2="0" gradientUnits="userSpaceOnUse"><stop offset="0" stop-color="#f2416e"/><stop offset="0.5" stop-color="#ee4170"/><stop offset="0.8" stop-color="#a45aa0"/><stop offset="1" stop-color="#7f6ab8"/></linearGradient>
<path d="M143,75 L165.5,61.5 A21.5,21.5 0 1 1 162.5,96 Z" fill="url(#lgp)"/>
<path d="M119,53.5 L163,95.5 C156,90 150,87.5 143,88 C134,88.5 126,97 117.5,104 A30,30 0 1 1 119,53.5 Z" fill="url(#lgr)"/>
<g fill="none" stroke="#fff" stroke-width="2.3"><path d="M233.3,73.05 A9.25,9.25 0 1 0 233.3,90.35"/><path d="M239.75,63.9 V92 M239.75,78.3 A5.8,5.8 0 0 1 251.35,78.3 V92"/><circle cx="267.05" cy="81.65" r="9.4"/><path d="M282.15,71.3 V92 M282.15,80.5 A8,8 0 0 1 290,72.45"/><circle cx="300.9" cy="81.65" r="9.4"/><path d="M310.3,63.9 V92"/><path d="M317.8,71.3 V95 A4.5,4.5 0 0 1 313.3,99.5 H309.5"/><circle cx="333.6" cy="81.65" r="8.6"/><path d="M341.9,71.3 V92"/><path d="M348.65,71.3 V92 M348.65,79 A6.62,6.62 0 0 1 361.9,79 V92 M361.9,79 A6.9,6.9 0 0 1 375.7,79 V92"/></g><circle cx="317.8" cy="65.8" r="1.6" fill="#fff"/>
<path d="M555.5,66 L569.5,74 L555.5,82 Z" fill="#2a2650" stroke="#2a2650" stroke-width="2.5" stroke-linejoin="round"/>
<path d="M859,66.5 L851,74 L859,81.5" fill="none" stroke="#8a84c4" stroke-width="3.5" stroke-linecap="round" stroke-linejoin="round"/>
<path d="M1165,66.5 L1173,74 L1165,81.5" fill="none" stroke="#8a84c4" stroke-width="3.5" stroke-linecap="round" stroke-linejoin="round"/>
<rect x="1229" y="64" width="23" height="2" fill="#7d77bd"/>
<rect x="1229" y="73" width="23" height="2" fill="#7d77bd"/>
<rect x="1229" y="82" width="23" height="2" fill="#7d77bd"/>
<path d="M1307.5,64 V79 M1301,73 L1307.5,79.5 L1314,73 M1298,77 V84 H1317 V77" fill="none" stroke="#7d77bd" stroke-width="2"/>
<path d="M1410,73.5 L1422.5,64 V69 C1433,68.5 1440,74 1442,83 C1436,79 1429,77 1422.5,78 V83.5 Z" fill="#8a84c4" stroke="#8a84c4" stroke-width="1.5" stroke-linejoin="round"/>
<path d="M1512,73.5 L1499.5,64 V69 C1489,68.5 1482,74 1480.5,83 C1486,79 1493,77 1499.5,78 V83.5 Z" fill="#56508a" stroke="#56508a" stroke-width="1.5" stroke-linejoin="round"/>
<path d="M1833.00,64.00 L1833.30,64.01 L1833.61,64.03 L1833.91,64.09 L1834.20,64.19 L1834.48,64.39 L1834.71,64.78 L1834.88,65.44 L1834.99,66.24 L1835.09,66.90 L1835.22,67.30 L1835.39,67.52 L1835.58,67.66 L1835.78,67.76 L1835.98,67.85 L1836.18,67.93 L1836.38,68.01 L1836.58,68.09 L1836.79,68.16 L1837.02,68.19 L1837.30,68.16 L1837.68,67.97 L1838.21,67.58 L1838.85,67.08 L1839.44,66.74 L1839.88,66.63 L1840.22,66.68 L1840.50,66.82 L1840.75,66.99 L1840.98,67.19 L1841.20,67.40 L1841.41,67.62 L1841.61,67.85 L1841.78,68.10 L1841.92,68.38 L1841.97,68.72 L1841.86,69.16 L1841.52,69.75 L1841.02,70.39 L1840.63,70.92 L1840.44,71.30 L1840.41,71.58 L1840.44,71.81 L1840.51,72.02 L1840.59,72.22 L1840.67,72.42 L1840.75,72.62 L1840.84,72.82 L1840.94,73.02 L1841.08,73.21 L1841.30,73.38 L1841.70,73.51 L1842.36,73.61 L1843.16,73.72 L1843.82,73.89 L1844.21,74.12 L1844.41,74.40 L1844.51,74.69 L1844.57,74.99 L1844.59,75.30 L1844.60,75.60 L1844.59,75.90 L1844.57,76.21 L1844.51,76.51 L1844.41,76.80 L1844.21,77.08 L1843.82,77.31 L1843.16,77.48 L1842.36,77.59 L1841.70,77.69 L1841.30,77.82 L1841.08,77.99 L1840.94,78.18 L1840.84,78.38 L1840.75,78.58 L1840.67,78.78 L1840.59,78.98 L1840.51,79.18 L1840.44,79.39 L1840.41,79.62 L1840.44,79.90 L1840.63,80.28 L1841.02,80.81 L1841.52,81.45 L1841.86,82.04 L1841.97,82.48 L1841.92,82.82 L1841.78,83.10 L1841.61,83.35 L1841.41,83.58 L1841.20,83.80 L1840.98,84.01 L1840.75,84.21 L1840.50,84.38 L1840.22,84.52 L1839.88,84.57 L1839.44,84.46 L1838.85,84.12 L1838.21,83.62 L1837.68,83.23 L1837.30,83.04 L1837.02,83.01 L1836.79,83.04 L1836.58,83.11 L1836.38,83.19 L1836.18,83.27 L1835.98,83.35 L1835.78,83.44 L1835.58,83.54 L1835.39,83.68 L1835.22,83.90 L1835.09,84.30 L1834.99,84.96 L1834.88,85.76 L1834.71,86.42 L1834.48,86.81 L1834.20,87.01 L1833.91,87.11 L1833.61,87.17 L1833.30,87.19 L1833.00,87.20 L1832.70,87.19 L1832.39,87.17 L1832.09,87.11 L1831.80,87.01 L1831.52,86.81 L1831.29,86.42 L1831.12,85.76 L1831.01,84.96 L1830.91,84.30 L1830.78,83.90 L1830.61,83.68 L1830.42,83.54 L1830.22,83.44 L1830.02,83.35 L1829.82,83.27 L1829.62,83.19 L1829.42,83.11 L1829.21,83.04 L1828.98,83.01 L1828.70,83.04 L1828.32,83.23 L1827.79,83.62 L1827.15,84.12 L1826.56,84.46 L1826.12,84.57 L1825.78,84.52 L1825.50,84.38 L1825.25,84.21 L1825.02,84.01 L1824.80,83.80 L1824.59,83.58 L1824.39,83.35 L1824.22,83.10 L1824.08,82.82 L1824.03,82.48 L1824.14,82.04 L1824.48,81.45 L1824.98,80.81 L1825.37,80.28 L1825.56,79.90 L1825.59,79.62 L1825.56,79.39 L1825.49,79.18 L1825.41,78.98 L1825.33,78.78 L1825.25,78.58 L1825.16,78.38 L1825.06,78.18 L1824.92,77.99 L1824.70,77.82 L1824.30,77.69 L1823.64,77.59 L1822.84,77.48 L1822.18,77.31 L1821.79,77.08 L1821.59,76.80 L1821.49,76.51 L1821.43,76.21 L1821.41,75.90 L1821.40,75.60 L1821.41,75.30 L1821.43,74.99 L1821.49,74.69 L1821.59,74.40 L1821.79,74.12 L1822.18,73.89 L1822.84,73.72 L1823.64,73.61 L1824.30,73.51 L1824.70,73.38 L1824.92,73.21 L1825.06,73.02 L1825.16,72.82 L1825.25,72.62 L1825.33,72.42 L1825.41,72.22 L1825.49,72.02 L1825.56,71.81 L1825.59,71.58 L1825.56,71.30 L1825.37,70.92 L1824.98,70.39 L1824.48,69.75 L1824.14,69.16 L1824.03,68.72 L1824.08,68.38 L1824.22,68.10 L1824.39,67.85 L1824.59,67.62 L1824.80,67.40 L1825.02,67.19 L1825.25,66.99 L1825.50,66.82 L1825.78,66.68 L1826.12,66.63 L1826.56,66.74 L1827.15,67.08 L1827.79,67.58 L1828.32,67.97 L1828.70,68.16 L1828.98,68.19 L1829.21,68.16 L1829.42,68.09 L1829.62,68.01 L1829.82,67.93 L1830.02,67.85 L1830.22,67.76 L1830.42,67.66 L1830.61,67.52 L1830.78,67.30 L1830.91,66.90 L1831.01,66.24 L1831.12,65.44 L1831.29,64.78 L1831.52,64.39 L1831.80,64.19 L1832.09,64.09 L1832.39,64.03 L1832.70,64.01Z" fill="#8a84c4"/><circle cx="1833" cy="75.6" r="4.1" fill="#393563"/>
<path d="M1912.5,75.5 L1913.5,66 L1916.5,69 L1921,64.5 L1924,67.5 L1919.5,72 L1922.5,75 Z" fill="#8f89c8" stroke="#8f89c8" stroke-width="1" stroke-linejoin="round"/>
<path d="M1912.5,75.5 L1911.5,85 L1908.5,82 L1904,86.5 L1901,83.5 L1905.5,79 L1902.5,76 Z" fill="#8f89c8" stroke="#8f89c8" stroke-width="1" stroke-linejoin="round"/>
<path d="M230.5,191 L236.5,197 L242.5,191" fill="none" stroke="#8a84c4" stroke-width="3.5" stroke-linecap="round" stroke-linejoin="round"/>
<g transform="translate(312.5,191.75)" fill="#6a62c2"><rect x="-11" y="-4.75" width="21.5" height="3.5"/><path d="M1,-10.75 L11,-1.25 L1,-1.25Z"/><rect x="-10.5" y="1.25" width="21.5" height="3.5"/><path d="M-11,1.25 L-1.5,10.75 L-1.5,1.25Z"/></g>
<circle cx="376.5" cy="190" r="6.5" fill="none" stroke="#6a62c2" stroke-width="3.6"/>
<path d="M381.5,195.5 L386.5,200.5" stroke="#6a62c2" stroke-width="3.8" stroke-linecap="round"/>
<path d="M603.5,186.5 L595,194.5 L603.5,202.5" fill="none" stroke="#8a84c4" stroke-width="3.6" stroke-linecap="round" stroke-linejoin="round"/>
<path d="M751,186.5 L759.5,194.5 L751,202.5" fill="none" stroke="#8a84c4" stroke-width="3.6" stroke-linecap="round" stroke-linejoin="round"/>
<circle cx="819.0" cy="200.0" r="3" fill="#6a62c2"/><circle cx="827.0" cy="192.0" r="3" fill="#6a62c2"/><circle cx="835.0" cy="184.0" r="3" fill="#6a62c2"/>
<g transform="translate(893,191.75)" fill="#6a62c2"><rect x="-11" y="-4.75" width="21.5" height="3.5"/><path d="M1,-10.75 L11,-1.25 L1,-1.25Z"/><rect x="-10.5" y="1.25" width="21.5" height="3.5"/><path d="M-11,1.25 L-1.5,10.75 L-1.5,1.25Z"/></g>
<path d="M1287.5,191 L1293.5,197 L1299.5,191" fill="none" stroke="#8a84c4" stroke-width="3.5" stroke-linecap="round" stroke-linejoin="round"/>
<path d="M1668.5,186.5 L1660,194.5 L1668.5,202.5" fill="none" stroke="#8a84c4" stroke-width="3.6" stroke-linecap="round" stroke-linejoin="round"/>
<path d="M1810.5,186.5 L1819,194.5 L1810.5,202.5" fill="none" stroke="#8a84c4" stroke-width="3.6" stroke-linecap="round" stroke-linejoin="round"/>
<circle cx="1879.0" cy="200.0" r="3" fill="#6a62c2"/><circle cx="1887.0" cy="192.0" r="3" fill="#6a62c2"/><circle cx="1895.0" cy="184.0" r="3" fill="#6a62c2"/>
<g transform="translate(1953,191.75)" fill="#6a62c2"><rect x="-11" y="-4.75" width="21.5" height="3.5"/><path d="M1,-10.75 L11,-1.25 L1,-1.25Z"/><rect x="-10.5" y="1.25" width="21.5" height="3.5"/><path d="M-11,1.25 L-1.5,10.75 L-1.5,1.25Z"/></g>
<circle cx="92.8" cy="427.7" r="3" fill="#fff"/><circle cx="100.0" cy="420.5" r="3" fill="#fff"/><circle cx="107.2" cy="413.3" r="3" fill="#fff"/>
<path transform="translate(100,514.5)" d="M0,0 C-2.8,-3.6 -5.2,-5 -7.8,-5 C-10.9,-5 -12.8,-2.6 -12.8,0 C-12.8,2.6 -10.9,5 -7.8,5 C-5.2,5 -2.8,3.6 0,0 C2.8,-3.6 5.2,-5 7.8,-5 C10.9,-5 12.8,-2.6 12.8,0 C12.8,2.6 10.9,5 7.8,5 C5.2,5 2.8,3.6 0,0Z" fill="none" stroke="#6a62c2" stroke-width="2.6"/>
<g transform="translate(100.5,587) scale(1.0)" fill="none" stroke="#6a62c2" stroke-width="2.5"><circle cx="-9" cy="0" r="3.8"/><path d="M-5.2,0 H13 M5,0 V4 M10.5,0 V4"/></g>
<g transform="translate(100,659.0)" fill="none" stroke="#6a62c2" stroke-width="2.4" stroke-linecap="round" stroke-linejoin="round"><path d="M5.5,-11.8 A12,12 0 0 0 -12.5,1.5"/><path d="M-16,-2 L-12.8,2.2 L-8.5,-0.8"/><path d="M-5.5,11.8 A12,12 0 0 0 12,0"/><path d="M8.5,3.2 L12,-1 L15.5,3.2"/></g>
<g transform="translate(304.5,444.4) scale(1.0)" fill="none" stroke="#2a2650" stroke-width="2.9"><circle cx="-9" cy="0" r="3.8"/><path d="M-5.2,0 H13 M5,0 V4 M10.5,0 V4"/></g>
<g transform="translate(304.5,500.4) scale(1.0)" fill="none" stroke="#2a2650" stroke-width="2.9"><circle cx="-9" cy="0" r="3.8"/><path d="M-5.2,0 H13 M5,0 V4 M10.5,0 V4"/></g>
<g transform="translate(304.5,556.4) scale(1.0)" fill="none" stroke="#2a2650" stroke-width="2.9"><circle cx="-9" cy="0" r="3.8"/><path d="M-5.2,0 H13 M5,0 V4 M10.5,0 V4"/></g>
<g transform="translate(304.5,612.4) scale(1.0)" fill="none" stroke="#2a2650" stroke-width="2.9"><circle cx="-9" cy="0" r="3.8"/><path d="M-5.2,0 H13 M5,0 V4 M10.5,0 V4"/></g>
<g transform="translate(304.5,668.4) scale(1.0)" fill="none" stroke="#2a2650" stroke-width="2.9"><circle cx="-9" cy="0" r="3.8"/><path d="M-5.2,0 H13 M5,0 V4 M10.5,0 V4"/></g>
<path d="M513.5,369 L519.5,375 L525.5,369" fill="none" stroke="#4a4580" stroke-width="2.8" stroke-linecap="round" stroke-linejoin="round"/>
<g transform="translate(596.5,371.5)" fill="#433e76"><rect x="-11" y="-4.75" width="21.5" height="3.5"/><path d="M1,-10.75 L11,-1.25 L1,-1.25Z"/><rect x="-10.5" y="1.25" width="21.5" height="3.5"/><path d="M-11,1.25 L-1.5,10.75 L-1.5,1.25Z"/></g>
<circle cx="732.8" cy="427.7" r="3" fill="#fff"/><circle cx="740.0" cy="420.5" r="3" fill="#fff"/><circle cx="747.2" cy="413.3" r="3" fill="#fff"/>
<path transform="translate(740,514.5)" d="M0,0 C-2.8,-3.6 -5.2,-5 -7.8,-5 C-10.9,-5 -12.8,-2.6 -12.8,0 C-12.8,2.6 -10.9,5 -7.8,5 C-5.2,5 -2.8,3.6 0,0 C2.8,-3.6 5.2,-5 7.8,-5 C10.9,-5 12.8,-2.6 12.8,0 C12.8,2.6 10.9,5 7.8,5 C5.2,5 2.8,3.6 0,0Z" fill="none" stroke="#6a62c2" stroke-width="2.6"/>
<g transform="translate(740.5,587) scale(1.0)" fill="none" stroke="#6a62c2" stroke-width="2.5"><circle cx="-9" cy="0" r="3.8"/><path d="M-5.2,0 H13 M5,0 V4 M10.5,0 V4"/></g>
<g transform="translate(740,659.0)" fill="none" stroke="#6a62c2" stroke-width="2.4" stroke-linecap="round" stroke-linejoin="round"><path d="M5.5,-11.8 A12,12 0 0 0 -12.5,1.5"/><path d="M-16,-2 L-12.8,2.2 L-8.5,-0.8"/><path d="M-5.5,11.8 A12,12 0 0 0 12,0"/><path d="M8.5,3.2 L12,-1 L15.5,3.2"/></g>
<circle cx="1377.8" cy="427.7" r="3" fill="#fff"/><circle cx="1385.0" cy="420.5" r="3" fill="#fff"/><circle cx="1392.2" cy="413.3" r="3" fill="#fff"/>
<path transform="translate(1385,514.5)" d="M0,0 C-2.8,-3.6 -5.2,-5 -7.8,-5 C-10.9,-5 -12.8,-2.6 -12.8,0 C-12.8,2.6 -10.9,5 -7.8,5 C-5.2,5 -2.8,3.6 0,0 C2.8,-3.6 5.2,-5 7.8,-5 C10.9,-5 12.8,-2.6 12.8,0 C12.8,2.6 10.9,5 7.8,5 C5.2,5 2.8,3.6 0,0Z" fill="none" stroke="#6a62c2" stroke-width="2.6"/>
<g transform="translate(1385.5,587) scale(1.0)" fill="none" stroke="#6a62c2" stroke-width="2.5"><circle cx="-9" cy="0" r="3.8"/><path d="M-5.2,0 H13 M5,0 V4 M10.5,0 V4"/></g>
<g transform="translate(1385,659.0)" fill="none" stroke="#6a62c2" stroke-width="2.4" stroke-linecap="round" stroke-linejoin="round"><path d="M5.5,-11.8 A12,12 0 0 0 -12.5,1.5"/><path d="M-16,-2 L-12.8,2.2 L-8.5,-0.8"/><path d="M-5.5,11.8 A12,12 0 0 0 12,0"/><path d="M8.5,3.2 L12,-1 L15.5,3.2"/></g>
<path d="M1876,743.5 H1976 A14,14 0 0 1 1990,757.5 V857.5 A114,114 0 0 1 1876,743.5 Z" fill="#5e58ac"/>
<g transform="translate(1943,794) rotate(-27)" fill="#fff">
<rect x="-11.5" y="-13" width="23" height="5.5"/>
<rect x="-11.5" y="-6" width="6.5" height="5.6"/><rect x="-3.2" y="-6" width="6.5" height="5.6"/><rect x="5" y="-6" width="6.5" height="5.6"/>
<rect x="-11.5" y="1.3" width="6.5" height="5.6"/><rect x="-3.2" y="1.3" width="6.5" height="5.6"/><rect x="5" y="1.3" width="6.5" height="5.6"/>
<rect x="-11.5" y="8.6" width="6.5" height="5.6"/><rect x="-3.2" y="8.6" width="6.5" height="5.6"/><rect x="5" y="8.6" width="6.5" height="5.6"/>
<rect x="-11" y="-18" width="1.6" height="4"/>
<rect x="-9.5" y="-11.2" width="2" height="1.6" fill="#5e58ac"/><rect x="-6.7" y="-11.2" width="2" height="1.6" fill="#5e58ac"/>
</g>
<rect x="431.2" y="830.0" width="9.2" height="4.7" fill="#fff"/><rect x="408.7" y="839.0" width="9.2" height="4.7" fill="#fff"/><rect x="426.9" y="839.0" width="9.2" height="4.7" fill="#fff"/><rect x="442.8" y="839.0" width="9.2" height="4.7" fill="#fff"/><rect x="417.9" y="848.3" width="9.2" height="4.7" fill="#fff"/>
<rect x="611.2" y="830.0" width="9.2" height="4.7" fill="#fff"/><rect x="588.7" y="839.0" width="9.2" height="4.7" fill="#fff"/><rect x="606.9" y="839.0" width="9.2" height="4.7" fill="#fff"/><rect x="622.8" y="839.0" width="9.2" height="4.7" fill="#fff"/><rect x="597.9" y="848.3" width="9.2" height="4.7" fill="#fff"/>
<rect x="792.2" y="830.0" width="9.2" height="4.7" fill="#fff"/><rect x="769.7" y="839.0" width="9.2" height="4.7" fill="#fff"/><rect x="787.9" y="839.0" width="9.2" height="4.7" fill="#fff"/><rect x="803.8" y="839.0" width="9.2" height="4.7" fill="#fff"/><rect x="778.9" y="848.3" width="9.2" height="4.7" fill="#fff"/>
<g transform="translate(985.5,825.4)"><path d="M-6.5,0 A6.5,6.1 0 1 0 6.5,0 A6.5,6.1 0 1 0 -6.5,0 Z M3.14,-1.02 L3.32,-0.38 L3.44,0.27 L3.50,0.91 L3.51,1.54 L3.45,2.14 L3.33,2.71 L3.16,3.23 L2.93,3.69 L2.66,4.09 L2.33,4.42 L1.97,4.68 L1.58,4.85 L1.15,4.94 L0.71,4.95 L0.25,4.87 L-0.20,4.71 L-0.66,4.47 L-1.10,4.15 L-1.53,3.76 L-1.93,3.31 L-2.30,2.80 L-2.62,2.24 L-2.91,1.64 L-3.14,1.02 L-3.32,0.38 L-3.44,-0.27 L-3.50,-0.91 L-3.51,-1.54 L-3.45,-2.14 L-3.33,-2.71 L-3.16,-3.23 L-2.93,-3.69 L-2.66,-4.09 L-2.33,-4.42 L-1.97,-4.68 L-1.58,-4.85 L-1.15,-4.94 L-0.71,-4.95 L-0.25,-4.87 L0.20,-4.71 L0.66,-4.47 L1.10,-4.15 L1.53,-3.76 L1.93,-3.31 L2.30,-2.80 L2.62,-2.24 L2.91,-1.64Z" fill="#fff" fill-rule="evenodd"/></g><g transform="translate(985.5,837.4)"><path d="M-6.5,0 A6.5,6.1 0 1 0 6.5,0 A6.5,6.1 0 1 0 -6.5,0 Z M3.14,-1.02 L3.32,-0.38 L3.44,0.27 L3.50,0.91 L3.51,1.54 L3.45,2.14 L3.33,2.71 L3.16,3.23 L2.93,3.69 L2.66,4.09 L2.33,4.42 L1.97,4.68 L1.58,4.85 L1.15,4.94 L0.71,4.95 L0.25,4.87 L-0.20,4.71 L-0.66,4.47 L-1.10,4.15 L-1.53,3.76 L-1.93,3.31 L-2.30,2.80 L-2.62,2.24 L-2.91,1.64 L-3.14,1.02 L-3.32,0.38 L-3.44,-0.27 L-3.50,-0.91 L-3.51,-1.54 L-3.45,-2.14 L-3.33,-2.71 L-3.16,-3.23 L-2.93,-3.69 L-2.66,-4.09 L-2.33,-4.42 L-1.97,-4.68 L-1.58,-4.85 L-1.15,-4.94 L-0.71,-4.95 L-0.25,-4.87 L0.20,-4.71 L0.66,-4.47 L1.10,-4.15 L1.53,-3.76 L1.93,-3.31 L2.30,-2.80 L2.62,-2.24 L2.91,-1.64Z" fill="#fff" fill-rule="evenodd"/></g><g transform="translate(985.5,849.4)"><path d="M-6.5,0 A6.5,6.1 0 1 0 6.5,0 A6.5,6.1 0 1 0 -6.5,0 Z M3.14,-1.02 L3.32,-0.38 L3.44,0.27 L3.50,0.91 L3.51,1.54 L3.45,2.14 L3.33,2.71 L3.16,3.23 L2.93,3.69 L2.66,4.09 L2.33,4.42 L1.97,4.68 L1.58,4.85 L1.15,4.94 L0.71,4.95 L0.25,4.87 L-0.20,4.71 L-0.66,4.47 L-1.10,4.15 L-1.53,3.76 L-1.93,3.31 L-2.30,2.80 L-2.62,2.24 L-2.91,1.64 L-3.14,1.02 L-3.32,0.38 L-3.44,-0.27 L-3.50,-0.91 L-3.51,-1.54 L-3.45,-2.14 L-3.33,-2.71 L-3.16,-3.23 L-2.93,-3.69 L-2.66,-4.09 L-2.33,-4.42 L-1.97,-4.68 L-1.58,-4.85 L-1.15,-4.94 L-0.71,-4.95 L-0.25,-4.87 L0.20,-4.71 L0.66,-4.47 L1.10,-4.15 L1.53,-3.76 L1.93,-3.31 L2.30,-2.80 L2.62,-2.24 L2.91,-1.64Z" fill="#fff" fill-rule="evenodd"/></g>
<g transform="translate(1172.8,825.4)"><path d="M-6.5,0 A6.5,6.1 0 1 0 6.5,0 A6.5,6.1 0 1 0 -6.5,0 Z M3.14,-1.02 L3.32,-0.38 L3.44,0.27 L3.50,0.91 L3.51,1.54 L3.45,2.14 L3.33,2.71 L3.16,3.23 L2.93,3.69 L2.66,4.09 L2.33,4.42 L1.97,4.68 L1.58,4.85 L1.15,4.94 L0.71,4.95 L0.25,4.87 L-0.20,4.71 L-0.66,4.47 L-1.10,4.15 L-1.53,3.76 L-1.93,3.31 L-2.30,2.80 L-2.62,2.24 L-2.91,1.64 L-3.14,1.02 L-3.32,0.38 L-3.44,-0.27 L-3.50,-0.91 L-3.51,-1.54 L-3.45,-2.14 L-3.33,-2.71 L-3.16,-3.23 L-2.93,-3.69 L-2.66,-4.09 L-2.33,-4.42 L-1.97,-4.68 L-1.58,-4.85 L-1.15,-4.94 L-0.71,-4.95 L-0.25,-4.87 L0.20,-4.71 L0.66,-4.47 L1.10,-4.15 L1.53,-3.76 L1.93,-3.31 L2.30,-2.80 L2.62,-2.24 L2.91,-1.64Z" fill="#fff" fill-rule="evenodd"/></g><g transform="translate(1172.8,837.4)"><path d="M-6.5,0 A6.5,6.1 0 1 0 6.5,0 A6.5,6.1 0 1 0 -6.5,0 Z M3.14,-1.02 L3.32,-0.38 L3.44,0.27 L3.50,0.91 L3.51,1.54 L3.45,2.14 L3.33,2.71 L3.16,3.23 L2.93,3.69 L2.66,4.09 L2.33,4.42 L1.97,4.68 L1.58,4.85 L1.15,4.94 L0.71,4.95 L0.25,4.87 L-0.20,4.71 L-0.66,4.47 L-1.10,4.15 L-1.53,3.76 L-1.93,3.31 L-2.30,2.80 L-2.62,2.24 L-2.91,1.64 L-3.14,1.02 L-3.32,0.38 L-3.44,-0.27 L-3.50,-0.91 L-3.51,-1.54 L-3.45,-2.14 L-3.33,-2.71 L-3.16,-3.23 L-2.93,-3.69 L-2.66,-4.09 L-2.33,-4.42 L-1.97,-4.68 L-1.58,-4.85 L-1.15,-4.94 L-0.71,-4.95 L-0.25,-4.87 L0.20,-4.71 L0.66,-4.47 L1.10,-4.15 L1.53,-3.76 L1.93,-3.31 L2.30,-2.80 L2.62,-2.24 L2.91,-1.64Z" fill="#fff" fill-rule="evenodd"/></g><g transform="translate(1172.8,849.4)"><path d="M-6.5,0 A6.5,6.1 0 1 0 6.5,0 A6.5,6.1 0 1 0 -6.5,0 Z M3.14,-1.02 L3.32,-0.38 L3.44,0.27 L3.50,0.91 L3.51,1.54 L3.45,2.14 L3.33,2.71 L3.16,3.23 L2.93,3.69 L2.66,4.09 L2.33,4.42 L1.97,4.68 L1.58,4.85 L1.15,4.94 L0.71,4.95 L0.25,4.87 L-0.20,4.71 L-0.66,4.47 L-1.10,4.15 L-1.53,3.76 L-1.93,3.31 L-2.30,2.80 L-2.62,2.24 L-2.91,1.64 L-3.14,1.02 L-3.32,0.38 L-3.44,-0.27 L-3.50,-0.91 L-3.51,-1.54 L-3.45,-2.14 L-3.33,-2.71 L-3.16,-3.23 L-2.93,-3.69 L-2.66,-4.09 L-2.33,-4.42 L-1.97,-4.68 L-1.58,-4.85 L-1.15,-4.94 L-0.71,-4.95 L-0.25,-4.87 L0.20,-4.71 L0.66,-4.47 L1.10,-4.15 L1.53,-3.76 L1.93,-3.31 L2.30,-2.80 L2.62,-2.24 L2.91,-1.64Z" fill="#fff" fill-rule="evenodd"/></g>
<g transform="translate(1715.5,825.4)"><path d="M-6.5,0 A6.5,6.1 0 1 0 6.5,0 A6.5,6.1 0 1 0 -6.5,0 Z M3.14,-1.02 L3.32,-0.38 L3.44,0.27 L3.50,0.91 L3.51,1.54 L3.45,2.14 L3.33,2.71 L3.16,3.23 L2.93,3.69 L2.66,4.09 L2.33,4.42 L1.97,4.68 L1.58,4.85 L1.15,4.94 L0.71,4.95 L0.25,4.87 L-0.20,4.71 L-0.66,4.47 L-1.10,4.15 L-1.53,3.76 L-1.93,3.31 L-2.30,2.80 L-2.62,2.24 L-2.91,1.64 L-3.14,1.02 L-3.32,0.38 L-3.44,-0.27 L-3.50,-0.91 L-3.51,-1.54 L-3.45,-2.14 L-3.33,-2.71 L-3.16,-3.23 L-2.93,-3.69 L-2.66,-4.09 L-2.33,-4.42 L-1.97,-4.68 L-1.58,-4.85 L-1.15,-4.94 L-0.71,-4.95 L-0.25,-4.87 L0.20,-4.71 L0.66,-4.47 L1.10,-4.15 L1.53,-3.76 L1.93,-3.31 L2.30,-2.80 L2.62,-2.24 L2.91,-1.64Z" fill="#fff" fill-rule="evenodd"/></g><g transform="translate(1715.5,837.4)"><path d="M-6.5,0 A6.5,6.1 0 1 0 6.5,0 A6.5,6.1 0 1 0 -6.5,0 Z M3.14,-1.02 L3.32,-0.38 L3.44,0.27 L3.50,0.91 L3.51,1.54 L3.45,2.14 L3.33,2.71 L3.16,3.23 L2.93,3.69 L2.66,4.09 L2.33,4.42 L1.97,4.68 L1.58,4.85 L1.15,4.94 L0.71,4.95 L0.25,4.87 L-0.20,4.71 L-0.66,4.47 L-1.10,4.15 L-1.53,3.76 L-1.93,3.31 L-2.30,2.80 L-2.62,2.24 L-2.91,1.64 L-3.14,1.02 L-3.32,0.38 L-3.44,-0.27 L-3.50,-0.91 L-3.51,-1.54 L-3.45,-2.14 L-3.33,-2.71 L-3.16,-3.23 L-2.93,-3.69 L-2.66,-4.09 L-2.33,-4.42 L-1.97,-4.68 L-1.58,-4.85 L-1.15,-4.94 L-0.71,-4.95 L-0.25,-4.87 L0.20,-4.71 L0.66,-4.47 L1.10,-4.15 L1.53,-3.76 L1.93,-3.31 L2.30,-2.80 L2.62,-2.24 L2.91,-1.64Z" fill="#fff" fill-rule="evenodd"/></g><g transform="translate(1715.5,849.4)"><path d="M-6.5,0 A6.5,6.1 0 1 0 6.5,0 A6.5,6.1 0 1 0 -6.5,0 Z M3.14,-1.02 L3.32,-0.38 L3.44,0.27 L3.50,0.91 L3.51,1.54 L3.45,2.14 L3.33,2.71 L3.16,3.23 L2.93,3.69 L2.66,4.09 L2.33,4.42 L1.97,4.68 L1.58,4.85 L1.15,4.94 L0.71,4.95 L0.25,4.87 L-0.20,4.71 L-0.66,4.47 L-1.10,4.15 L-1.53,3.76 L-1.93,3.31 L-2.30,2.80 L-2.62,2.24 L-2.91,1.64 L-3.14,1.02 L-3.32,0.38 L-3.44,-0.27 L-3.50,-0.91 L-3.51,-1.54 L-3.45,-2.14 L-3.33,-2.71 L-3.16,-3.23 L-2.93,-3.69 L-2.66,-4.09 L-2.33,-4.42 L-1.97,-4.68 L-1.58,-4.85 L-1.15,-4.94 L-0.71,-4.95 L-0.25,-4.87 L0.20,-4.71 L0.66,-4.47 L1.10,-4.15 L1.53,-3.76 L1.93,-3.31 L2.30,-2.80 L2.62,-2.24 L2.91,-1.64Z" fill="#fff" fill-rule="evenodd"/></g>
<g transform="translate(804.5,1006)"><path d="M-6.5,0 A6.5,6.1 0 1 0 6.5,0 A6.5,6.1 0 1 0 -6.5,0 Z M3.14,-1.02 L3.32,-0.38 L3.44,0.27 L3.50,0.91 L3.51,1.54 L3.45,2.14 L3.33,2.71 L3.16,3.23 L2.93,3.69 L2.66,4.09 L2.33,4.42 L1.97,4.68 L1.58,4.85 L1.15,4.94 L0.71,4.95 L0.25,4.87 L-0.20,4.71 L-0.66,4.47 L-1.10,4.15 L-1.53,3.76 L-1.93,3.31 L-2.30,2.80 L-2.62,2.24 L-2.91,1.64 L-3.14,1.02 L-3.32,0.38 L-3.44,-0.27 L-3.50,-0.91 L-3.51,-1.54 L-3.45,-2.14 L-3.33,-2.71 L-3.16,-3.23 L-2.93,-3.69 L-2.66,-4.09 L-2.33,-4.42 L-1.97,-4.68 L-1.58,-4.85 L-1.15,-4.94 L-0.71,-4.95 L-0.25,-4.87 L0.20,-4.71 L0.66,-4.47 L1.10,-4.15 L1.53,-3.76 L1.93,-3.31 L2.30,-2.80 L2.62,-2.24 L2.91,-1.64Z" fill="#fff" fill-rule="evenodd"/></g><g transform="translate(804.5,1018)"><path d="M-6.5,0 A6.5,6.1 0 1 0 6.5,0 A6.5,6.1 0 1 0 -6.5,0 Z M3.14,-1.02 L3.32,-0.38 L3.44,0.27 L3.50,0.91 L3.51,1.54 L3.45,2.14 L3.33,2.71 L3.16,3.23 L2.93,3.69 L2.66,4.09 L2.33,4.42 L1.97,4.68 L1.58,4.85 L1.15,4.94 L0.71,4.95 L0.25,4.87 L-0.20,4.71 L-0.66,4.47 L-1.10,4.15 L-1.53,3.76 L-1.93,3.31 L-2.30,2.80 L-2.62,2.24 L-2.91,1.64 L-3.14,1.02 L-3.32,0.38 L-3.44,-0.27 L-3.50,-0.91 L-3.51,-1.54 L-3.45,-2.14 L-3.33,-2.71 L-3.16,-3.23 L-2.93,-3.69 L-2.66,-4.09 L-2.33,-4.42 L-1.97,-4.68 L-1.58,-4.85 L-1.15,-4.94 L-0.71,-4.95 L-0.25,-4.87 L0.20,-4.71 L0.66,-4.47 L1.10,-4.15 L1.53,-3.76 L1.93,-3.31 L2.30,-2.80 L2.62,-2.24 L2.91,-1.64Z" fill="#fff" fill-rule="evenodd"/></g><g transform="translate(804.5,1030)"><path d="M-6.5,0 A6.5,6.1 0 1 0 6.5,0 A6.5,6.1 0 1 0 -6.5,0 Z M3.14,-1.02 L3.32,-0.38 L3.44,0.27 L3.50,0.91 L3.51,1.54 L3.45,2.14 L3.33,2.71 L3.16,3.23 L2.93,3.69 L2.66,4.09 L2.33,4.42 L1.97,4.68 L1.58,4.85 L1.15,4.94 L0.71,4.95 L0.25,4.87 L-0.20,4.71 L-0.66,4.47 L-1.10,4.15 L-1.53,3.76 L-1.93,3.31 L-2.30,2.80 L-2.62,2.24 L-2.91,1.64 L-3.14,1.02 L-3.32,0.38 L-3.44,-0.27 L-3.50,-0.91 L-3.51,-1.54 L-3.45,-2.14 L-3.33,-2.71 L-3.16,-3.23 L-2.93,-3.69 L-2.66,-4.09 L-2.33,-4.42 L-1.97,-4.68 L-1.58,-4.85 L-1.15,-4.94 L-0.71,-4.95 L-0.25,-4.87 L0.20,-4.71 L0.66,-4.47 L1.10,-4.15 L1.53,-3.76 L1.93,-3.31 L2.30,-2.80 L2.62,-2.24 L2.91,-1.64Z" fill="#fff" fill-rule="evenodd"/></g>
<g transform="translate(1353.5,1006)"><path d="M-6.5,0 A6.5,6.1 0 1 0 6.5,0 A6.5,6.1 0 1 0 -6.5,0 Z M3.14,-1.02 L3.32,-0.38 L3.44,0.27 L3.50,0.91 L3.51,1.54 L3.45,2.14 L3.33,2.71 L3.16,3.23 L2.93,3.69 L2.66,4.09 L2.33,4.42 L1.97,4.68 L1.58,4.85 L1.15,4.94 L0.71,4.95 L0.25,4.87 L-0.20,4.71 L-0.66,4.47 L-1.10,4.15 L-1.53,3.76 L-1.93,3.31 L-2.30,2.80 L-2.62,2.24 L-2.91,1.64 L-3.14,1.02 L-3.32,0.38 L-3.44,-0.27 L-3.50,-0.91 L-3.51,-1.54 L-3.45,-2.14 L-3.33,-2.71 L-3.16,-3.23 L-2.93,-3.69 L-2.66,-4.09 L-2.33,-4.42 L-1.97,-4.68 L-1.58,-4.85 L-1.15,-4.94 L-0.71,-4.95 L-0.25,-4.87 L0.20,-4.71 L0.66,-4.47 L1.10,-4.15 L1.53,-3.76 L1.93,-3.31 L2.30,-2.80 L2.62,-2.24 L2.91,-1.64Z" fill="#fff" fill-rule="evenodd"/></g><g transform="translate(1353.5,1018)"><path d="M-6.5,0 A6.5,6.1 0 1 0 6.5,0 A6.5,6.1 0 1 0 -6.5,0 Z M3.14,-1.02 L3.32,-0.38 L3.44,0.27 L3.50,0.91 L3.51,1.54 L3.45,2.14 L3.33,2.71 L3.16,3.23 L2.93,3.69 L2.66,4.09 L2.33,4.42 L1.97,4.68 L1.58,4.85 L1.15,4.94 L0.71,4.95 L0.25,4.87 L-0.20,4.71 L-0.66,4.47 L-1.10,4.15 L-1.53,3.76 L-1.93,3.31 L-2.30,2.80 L-2.62,2.24 L-2.91,1.64 L-3.14,1.02 L-3.32,0.38 L-3.44,-0.27 L-3.50,-0.91 L-3.51,-1.54 L-3.45,-2.14 L-3.33,-2.71 L-3.16,-3.23 L-2.93,-3.69 L-2.66,-4.09 L-2.33,-4.42 L-1.97,-4.68 L-1.58,-4.85 L-1.15,-4.94 L-0.71,-4.95 L-0.25,-4.87 L0.20,-4.71 L0.66,-4.47 L1.10,-4.15 L1.53,-3.76 L1.93,-3.31 L2.30,-2.80 L2.62,-2.24 L2.91,-1.64Z" fill="#fff" fill-rule="evenodd"/></g><g transform="translate(1353.5,1030)"><path d="M-6.5,0 A6.5,6.1 0 1 0 6.5,0 A6.5,6.1 0 1 0 -6.5,0 Z M3.14,-1.02 L3.32,-0.38 L3.44,0.27 L3.50,0.91 L3.51,1.54 L3.45,2.14 L3.33,2.71 L3.16,3.23 L2.93,3.69 L2.66,4.09 L2.33,4.42 L1.97,4.68 L1.58,4.85 L1.15,4.94 L0.71,4.95 L0.25,4.87 L-0.20,4.71 L-0.66,4.47 L-1.10,4.15 L-1.53,3.76 L-1.93,3.31 L-2.30,2.80 L-2.62,2.24 L-2.91,1.64 L-3.14,1.02 L-3.32,0.38 L-3.44,-0.27 L-3.50,-0.91 L-3.51,-1.54 L-3.45,-2.14 L-3.33,-2.71 L-3.16,-3.23 L-2.93,-3.69 L-2.66,-4.09 L-2.33,-4.42 L-1.97,-4.68 L-1.58,-4.85 L-1.15,-4.94 L-0.71,-4.95 L-0.25,-4.87 L0.20,-4.71 L0.66,-4.47 L1.10,-4.15 L1.53,-3.76 L1.93,-3.31 L2.30,-2.80 L2.62,-2.24 L2.91,-1.64Z" fill="#fff" fill-rule="evenodd"/></g>
<path d="M104.30,1227.60 L104.62,1227.61 L104.95,1227.64 L105.27,1227.69 L105.58,1227.80 L105.88,1228.02 L106.13,1228.43 L106.31,1229.13 L106.43,1229.98 L106.54,1230.68 L106.68,1231.10 L106.87,1231.34 L107.07,1231.48 L107.28,1231.59 L107.49,1231.69 L107.71,1231.78 L107.92,1231.87 L108.14,1231.95 L108.37,1232.02 L108.61,1232.06 L108.91,1232.02 L109.31,1231.82 L109.88,1231.41 L110.56,1230.89 L111.18,1230.53 L111.66,1230.41 L112.02,1230.47 L112.32,1230.61 L112.58,1230.80 L112.83,1231.01 L113.07,1231.23 L113.29,1231.47 L113.50,1231.72 L113.69,1231.98 L113.83,1232.28 L113.89,1232.64 L113.77,1233.12 L113.41,1233.74 L112.89,1234.42 L112.48,1234.99 L112.28,1235.39 L112.24,1235.69 L112.28,1235.93 L112.35,1236.16 L112.43,1236.38 L112.52,1236.59 L112.61,1236.81 L112.71,1237.02 L112.82,1237.23 L112.96,1237.43 L113.20,1237.62 L113.62,1237.76 L114.32,1237.87 L115.17,1237.99 L115.87,1238.17 L116.28,1238.42 L116.50,1238.72 L116.61,1239.03 L116.66,1239.35 L116.69,1239.68 L116.70,1240.00 L116.69,1240.32 L116.66,1240.65 L116.61,1240.97 L116.50,1241.28 L116.28,1241.58 L115.87,1241.83 L115.17,1242.01 L114.32,1242.13 L113.62,1242.24 L113.20,1242.38 L112.96,1242.57 L112.82,1242.77 L112.71,1242.98 L112.61,1243.19 L112.52,1243.41 L112.43,1243.62 L112.35,1243.84 L112.28,1244.07 L112.24,1244.31 L112.28,1244.61 L112.48,1245.01 L112.89,1245.58 L113.41,1246.26 L113.77,1246.88 L113.89,1247.36 L113.83,1247.72 L113.69,1248.02 L113.50,1248.28 L113.29,1248.53 L113.07,1248.77 L112.83,1248.99 L112.58,1249.20 L112.32,1249.39 L112.02,1249.53 L111.66,1249.59 L111.18,1249.47 L110.56,1249.11 L109.88,1248.59 L109.31,1248.18 L108.91,1247.98 L108.61,1247.94 L108.37,1247.98 L108.14,1248.05 L107.92,1248.13 L107.71,1248.22 L107.49,1248.31 L107.28,1248.41 L107.07,1248.52 L106.87,1248.66 L106.68,1248.90 L106.54,1249.32 L106.43,1250.02 L106.31,1250.87 L106.13,1251.57 L105.88,1251.98 L105.58,1252.20 L105.27,1252.31 L104.95,1252.36 L104.62,1252.39 L104.30,1252.40 L103.98,1252.39 L103.65,1252.36 L103.33,1252.31 L103.02,1252.20 L102.72,1251.98 L102.47,1251.57 L102.29,1250.87 L102.17,1250.02 L102.06,1249.32 L101.92,1248.90 L101.73,1248.66 L101.53,1248.52 L101.32,1248.41 L101.11,1248.31 L100.89,1248.22 L100.68,1248.13 L100.46,1248.05 L100.23,1247.98 L99.99,1247.94 L99.69,1247.98 L99.29,1248.18 L98.72,1248.59 L98.04,1249.11 L97.42,1249.47 L96.94,1249.59 L96.58,1249.53 L96.28,1249.39 L96.02,1249.20 L95.77,1248.99 L95.53,1248.77 L95.31,1248.53 L95.10,1248.28 L94.91,1248.02 L94.77,1247.72 L94.71,1247.36 L94.83,1246.88 L95.19,1246.26 L95.71,1245.58 L96.12,1245.01 L96.32,1244.61 L96.36,1244.31 L96.32,1244.07 L96.25,1243.84 L96.17,1243.62 L96.08,1243.41 L95.99,1243.19 L95.89,1242.98 L95.78,1242.77 L95.64,1242.57 L95.40,1242.38 L94.98,1242.24 L94.28,1242.13 L93.43,1242.01 L92.73,1241.83 L92.32,1241.58 L92.10,1241.28 L91.99,1240.97 L91.94,1240.65 L91.91,1240.32 L91.90,1240.00 L91.91,1239.68 L91.94,1239.35 L91.99,1239.03 L92.10,1238.72 L92.32,1238.42 L92.73,1238.17 L93.43,1237.99 L94.28,1237.87 L94.98,1237.76 L95.40,1237.62 L95.64,1237.43 L95.78,1237.23 L95.89,1237.02 L95.99,1236.81 L96.08,1236.59 L96.17,1236.38 L96.25,1236.16 L96.32,1235.93 L96.36,1235.69 L96.32,1235.39 L96.12,1234.99 L95.71,1234.42 L95.19,1233.74 L94.83,1233.12 L94.71,1232.64 L94.77,1232.28 L94.91,1231.98 L95.10,1231.72 L95.31,1231.47 L95.53,1231.23 L95.77,1231.01 L96.02,1230.80 L96.28,1230.61 L96.58,1230.47 L96.94,1230.41 L97.42,1230.53 L98.04,1230.89 L98.72,1231.41 L99.29,1231.82 L99.69,1232.02 L99.99,1232.06 L100.23,1232.02 L100.46,1231.95 L100.68,1231.87 L100.89,1231.78 L101.11,1231.69 L101.32,1231.59 L101.53,1231.48 L101.73,1231.34 L101.92,1231.10 L102.06,1230.68 L102.17,1229.98 L102.29,1229.13 L102.47,1228.43 L102.72,1228.02 L103.02,1227.80 L103.33,1227.69 L103.65,1227.64 L103.98,1227.61Z" fill="#8a84c4"/><circle cx="104.3" cy="1240" r="4.4" fill="#26234a"/>
<g fill="none" stroke="#a49cd8" stroke-width="1.6"><path d="M208.5,1233 V1248 M212,1233 V1248"/><path d="M217.5,1233 Q214.5,1240.5 217.5,1248"/><path d="M222,1233 Q219,1240.5 222,1248"/><path d="M227,1233 Q223.5,1240.5 227,1248"/><path d="M235,1233.5 Q227.5,1234 227.5,1240.5 Q227.5,1247 235,1247.5"/></g>
<path d="M308.8,1223 L284.5,1240.2 L308.8,1257.4 Z" fill="#3c3770" stroke="#3c3770" stroke-width="5" stroke-linejoin="round"/>
<path d="M1724,1223 L1748.5,1240.2 L1724,1257.4 Z" fill="#3c3770" stroke="#3c3770" stroke-width="5" stroke-linejoin="round"/>
</svg>
</body></html>
